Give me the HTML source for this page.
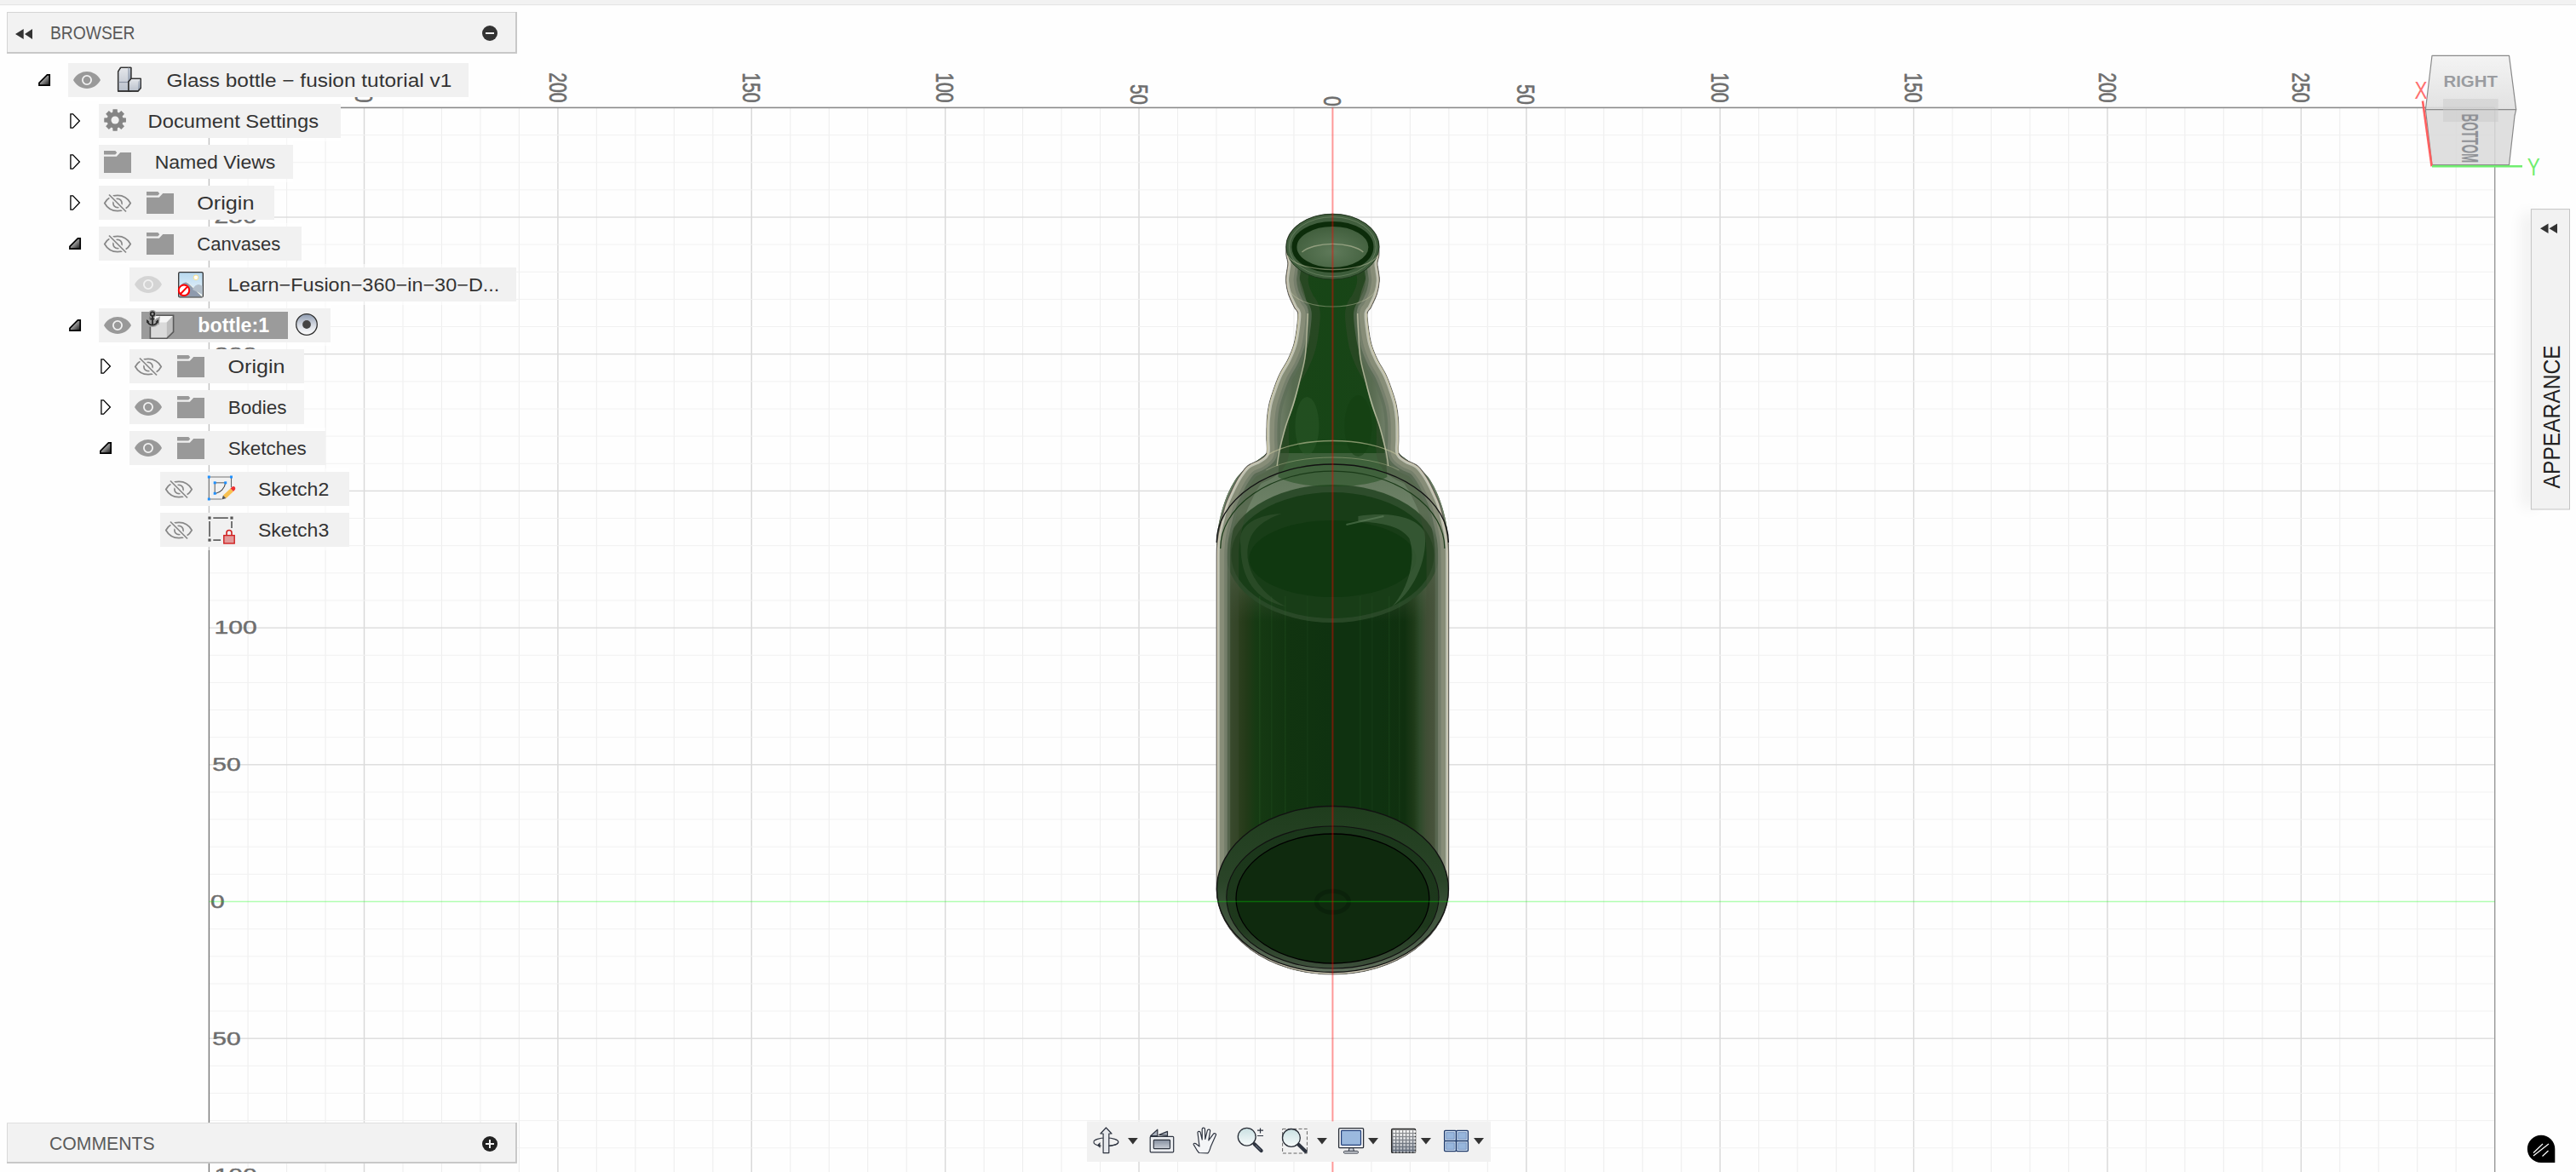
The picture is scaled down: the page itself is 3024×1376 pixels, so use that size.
<!DOCTYPE html>
<html><head><meta charset="utf-8"><title>Fusion 360</title><style>
html,body{margin:0;padding:0;width:3024px;height:1376px;overflow:hidden;background:#fefefe;font-family:"Liberation Sans",sans-serif}
svg{position:absolute;left:0;top:0}
text{font-family:"Liberation Sans",sans-serif}
.lab{font-size:30px;fill:#6e6e6e;stroke:#6e6e6e;stroke-width:0.6px}
</style></head><body>
<svg width="3024" height="1376" viewBox="0 0 3024 1376">
<defs>
<linearGradient id="tg" x1="0.2" y1="0.2" x2="1" y2="1"><stop offset="0" stop-color="#d8d8d8"/><stop offset="1" stop-color="#111"/></linearGradient>
<linearGradient id="cubeF" x1="0" y1="0" x2="0" y2="1"><stop offset="0" stop-color="#e4e6ea"/><stop offset="1" stop-color="#b9c0cb"/></linearGradient>
<linearGradient id="cubeS" x1="0" y1="0" x2="0" y2="1"><stop offset="0" stop-color="#c5ccd6"/><stop offset="1" stop-color="#8f9aab"/></linearGradient>
<linearGradient id="radioG" x1="0" y1="0" x2="0" y2="1"><stop offset="0" stop-color="#8e9bb0"/><stop offset="0.55" stop-color="#d9dde5"/><stop offset="1" stop-color="#ffffff"/></linearGradient>
<linearGradient id="skyG" x1="0" y1="0" x2="0" y2="1"><stop offset="0" stop-color="#b7d8ee"/><stop offset="1" stop-color="#f0f9ff"/></linearGradient>
<linearGradient id="vcTop" x1="0" y1="0" x2="0" y2="1"><stop offset="0" stop-color="#f2f2f2"/><stop offset="1" stop-color="#dedede"/></linearGradient>
<linearGradient id="lookG" x1="0" y1="0" x2="0" y2="1"><stop offset="0" stop-color="#858fa0"/><stop offset="1" stop-color="#c9ced6"/></linearGradient>
<linearGradient id="lensG" x1="0" y1="0" x2="0" y2="1"><stop offset="0" stop-color="#c9e0e2"/><stop offset="1" stop-color="#f7fbfb"/></linearGradient>
<linearGradient id="gridIcG" x1="0" y1="0" x2="0" y2="1"><stop offset="0" stop-color="#9a9a9a"/><stop offset="1" stop-color="#5c6676"/></linearGradient>
<filter id="sh" x="-300%" y="-10%" width="700%" height="120%"><feGaussianBlur stdDeviation="9"/></filter>
</defs>
<rect x="0" y="0" width="3024" height="6" fill="#f2f2f2"/>
<rect x="0" y="5" width="3024" height="1.2" fill="#e6e6e6"/>

<rect x="290.55" y="126.4" width="1.1" height="1249.6" fill="#eeeeee"/>
<rect x="336.03" y="126.4" width="1.1" height="1249.6" fill="#eeeeee"/>
<rect x="381.50" y="126.4" width="1.1" height="1249.6" fill="#eeeeee"/>
<rect x="426.83" y="126.4" width="1.4" height="1249.6" fill="#d8d8d8"/>
<rect x="472.45" y="126.4" width="1.1" height="1249.6" fill="#eeeeee"/>
<rect x="517.93" y="126.4" width="1.1" height="1249.6" fill="#eeeeee"/>
<rect x="563.40" y="126.4" width="1.1" height="1249.6" fill="#eeeeee"/>
<rect x="608.88" y="126.4" width="1.1" height="1249.6" fill="#eeeeee"/>
<rect x="654.20" y="126.4" width="1.4" height="1249.6" fill="#d8d8d8"/>
<rect x="699.83" y="126.4" width="1.1" height="1249.6" fill="#eeeeee"/>
<rect x="745.30" y="126.4" width="1.1" height="1249.6" fill="#eeeeee"/>
<rect x="790.78" y="126.4" width="1.1" height="1249.6" fill="#eeeeee"/>
<rect x="836.25" y="126.4" width="1.1" height="1249.6" fill="#eeeeee"/>
<rect x="881.58" y="126.4" width="1.4" height="1249.6" fill="#d8d8d8"/>
<rect x="927.20" y="126.4" width="1.1" height="1249.6" fill="#eeeeee"/>
<rect x="972.68" y="126.4" width="1.1" height="1249.6" fill="#eeeeee"/>
<rect x="1018.15" y="126.4" width="1.1" height="1249.6" fill="#eeeeee"/>
<rect x="1063.63" y="126.4" width="1.1" height="1249.6" fill="#eeeeee"/>
<rect x="1108.95" y="126.4" width="1.4" height="1249.6" fill="#d8d8d8"/>
<rect x="1154.58" y="126.4" width="1.1" height="1249.6" fill="#eeeeee"/>
<rect x="1200.05" y="126.4" width="1.1" height="1249.6" fill="#eeeeee"/>
<rect x="1245.53" y="126.4" width="1.1" height="1249.6" fill="#eeeeee"/>
<rect x="1291.00" y="126.4" width="1.1" height="1249.6" fill="#eeeeee"/>
<rect x="1336.33" y="126.4" width="1.4" height="1249.6" fill="#d8d8d8"/>
<rect x="1381.95" y="126.4" width="1.1" height="1249.6" fill="#eeeeee"/>
<rect x="1427.43" y="126.4" width="1.1" height="1249.6" fill="#eeeeee"/>
<rect x="1472.90" y="126.4" width="1.1" height="1249.6" fill="#eeeeee"/>
<rect x="1518.38" y="126.4" width="1.1" height="1249.6" fill="#eeeeee"/>
<rect x="1609.33" y="126.4" width="1.1" height="1249.6" fill="#eeeeee"/>
<rect x="1654.80" y="126.4" width="1.1" height="1249.6" fill="#eeeeee"/>
<rect x="1700.28" y="126.4" width="1.1" height="1249.6" fill="#eeeeee"/>
<rect x="1745.75" y="126.4" width="1.1" height="1249.6" fill="#eeeeee"/>
<rect x="1791.08" y="126.4" width="1.4" height="1249.6" fill="#d8d8d8"/>
<rect x="1836.70" y="126.4" width="1.1" height="1249.6" fill="#eeeeee"/>
<rect x="1882.18" y="126.4" width="1.1" height="1249.6" fill="#eeeeee"/>
<rect x="1927.65" y="126.4" width="1.1" height="1249.6" fill="#eeeeee"/>
<rect x="1973.13" y="126.4" width="1.1" height="1249.6" fill="#eeeeee"/>
<rect x="2018.45" y="126.4" width="1.4" height="1249.6" fill="#d8d8d8"/>
<rect x="2064.07" y="126.4" width="1.1" height="1249.6" fill="#eeeeee"/>
<rect x="2109.55" y="126.4" width="1.1" height="1249.6" fill="#eeeeee"/>
<rect x="2155.03" y="126.4" width="1.1" height="1249.6" fill="#eeeeee"/>
<rect x="2200.50" y="126.4" width="1.1" height="1249.6" fill="#eeeeee"/>
<rect x="2245.83" y="126.4" width="1.4" height="1249.6" fill="#d8d8d8"/>
<rect x="2291.45" y="126.4" width="1.1" height="1249.6" fill="#eeeeee"/>
<rect x="2336.93" y="126.4" width="1.1" height="1249.6" fill="#eeeeee"/>
<rect x="2382.40" y="126.4" width="1.1" height="1249.6" fill="#eeeeee"/>
<rect x="2427.88" y="126.4" width="1.1" height="1249.6" fill="#eeeeee"/>
<rect x="2473.20" y="126.4" width="1.4" height="1249.6" fill="#d8d8d8"/>
<rect x="2518.82" y="126.4" width="1.1" height="1249.6" fill="#eeeeee"/>
<rect x="2564.30" y="126.4" width="1.1" height="1249.6" fill="#eeeeee"/>
<rect x="2609.77" y="126.4" width="1.1" height="1249.6" fill="#eeeeee"/>
<rect x="2655.25" y="126.4" width="1.1" height="1249.6" fill="#eeeeee"/>
<rect x="2700.58" y="126.4" width="1.4" height="1249.6" fill="#d8d8d8"/>
<rect x="2746.20" y="126.4" width="1.1" height="1249.6" fill="#eeeeee"/>
<rect x="2791.68" y="126.4" width="1.1" height="1249.6" fill="#eeeeee"/>
<rect x="2837.15" y="126.4" width="1.1" height="1249.6" fill="#eeeeee"/>
<rect x="2882.62" y="126.4" width="1.1" height="1249.6" fill="#eeeeee"/>
<rect x="245.4" y="158.08" width="2683.2999999999997" height="1.0" fill="#f1f1f1"/>
<rect x="245.4" y="190.22" width="2683.2999999999997" height="1.0" fill="#f1f1f1"/>
<rect x="245.4" y="222.36" width="2683.2999999999997" height="1.0" fill="#f1f1f1"/>
<rect x="245.4" y="254.30" width="2683.2999999999997" height="1.4" fill="#dcdcdc"/>
<rect x="245.4" y="286.64" width="2683.2999999999997" height="1.0" fill="#f1f1f1"/>
<rect x="245.4" y="318.78" width="2683.2999999999997" height="1.0" fill="#f1f1f1"/>
<rect x="245.4" y="350.92" width="2683.2999999999997" height="1.0" fill="#f1f1f1"/>
<rect x="245.4" y="383.06" width="2683.2999999999997" height="1.0" fill="#f1f1f1"/>
<rect x="245.4" y="415.00" width="2683.2999999999997" height="1.4" fill="#dcdcdc"/>
<rect x="245.4" y="447.34" width="2683.2999999999997" height="1.0" fill="#f1f1f1"/>
<rect x="245.4" y="479.48" width="2683.2999999999997" height="1.0" fill="#f1f1f1"/>
<rect x="245.4" y="511.62" width="2683.2999999999997" height="1.0" fill="#f1f1f1"/>
<rect x="245.4" y="543.76" width="2683.2999999999997" height="1.0" fill="#f1f1f1"/>
<rect x="245.4" y="575.70" width="2683.2999999999997" height="1.4" fill="#dcdcdc"/>
<rect x="245.4" y="608.04" width="2683.2999999999997" height="1.0" fill="#f1f1f1"/>
<rect x="245.4" y="640.18" width="2683.2999999999997" height="1.0" fill="#f1f1f1"/>
<rect x="245.4" y="672.32" width="2683.2999999999997" height="1.0" fill="#f1f1f1"/>
<rect x="245.4" y="704.46" width="2683.2999999999997" height="1.0" fill="#f1f1f1"/>
<rect x="245.4" y="736.40" width="2683.2999999999997" height="1.4" fill="#dcdcdc"/>
<rect x="245.4" y="768.74" width="2683.2999999999997" height="1.0" fill="#f1f1f1"/>
<rect x="245.4" y="800.88" width="2683.2999999999997" height="1.0" fill="#f1f1f1"/>
<rect x="245.4" y="833.02" width="2683.2999999999997" height="1.0" fill="#f1f1f1"/>
<rect x="245.4" y="865.16" width="2683.2999999999997" height="1.0" fill="#f1f1f1"/>
<rect x="245.4" y="897.10" width="2683.2999999999997" height="1.4" fill="#dcdcdc"/>
<rect x="245.4" y="929.44" width="2683.2999999999997" height="1.0" fill="#f1f1f1"/>
<rect x="245.4" y="961.58" width="2683.2999999999997" height="1.0" fill="#f1f1f1"/>
<rect x="245.4" y="993.72" width="2683.2999999999997" height="1.0" fill="#f1f1f1"/>
<rect x="245.4" y="1025.86" width="2683.2999999999997" height="1.0" fill="#f1f1f1"/>
<rect x="245.4" y="1090.14" width="2683.2999999999997" height="1.0" fill="#f1f1f1"/>
<rect x="245.4" y="1122.28" width="2683.2999999999997" height="1.0" fill="#f1f1f1"/>
<rect x="245.4" y="1154.42" width="2683.2999999999997" height="1.0" fill="#f1f1f1"/>
<rect x="245.4" y="1186.56" width="2683.2999999999997" height="1.0" fill="#f1f1f1"/>
<rect x="245.4" y="1218.50" width="2683.2999999999997" height="1.4" fill="#dcdcdc"/>
<rect x="245.4" y="1250.84" width="2683.2999999999997" height="1.0" fill="#f1f1f1"/>
<rect x="245.4" y="1282.98" width="2683.2999999999997" height="1.0" fill="#f1f1f1"/>
<rect x="245.4" y="1315.12" width="2683.2999999999997" height="1.0" fill="#f1f1f1"/>
<rect x="245.4" y="1347.26" width="2683.2999999999997" height="1.0" fill="#f1f1f1"/>
<rect x="245.4" y="125.60000000000001" width="2683.2999999999997" height="1.6" fill="#8a8a8a"/>
<rect x="244.70000000000002" y="126.4" width="1.4" height="1249.6" fill="#777"/>
<rect x="2928.0" y="126.4" width="1.4" height="1249.6" fill="#999"/>
<rect x="80" y="70" width="470" height="48" fill="#fff" opacity="0.55"/>
<rect x="116" y="118" width="284" height="48" fill="#fff" opacity="0.55"/>
<rect x="116" y="166" width="228" height="48" fill="#fff" opacity="0.55"/>
<rect x="116" y="214" width="206" height="48" fill="#fff" opacity="0.55"/>
<rect x="116" y="262" width="238" height="48" fill="#fff" opacity="0.55"/>
<rect x="152" y="310" width="454" height="48" fill="#fff" opacity="0.55"/>
<rect x="116" y="358" width="272" height="48" fill="#fff" opacity="0.55"/>
<rect x="152" y="406" width="205" height="48" fill="#fff" opacity="0.55"/>
<rect x="152" y="454" width="205" height="48" fill="#fff" opacity="0.55"/>
<rect x="152" y="502" width="230" height="48" fill="#fff" opacity="0.55"/>
<rect x="188" y="550" width="222" height="48" fill="#fff" opacity="0.55"/>
<rect x="188" y="598" width="222" height="48" fill="#fff" opacity="0.55"/>
<text transform="translate(427.53,120.60) rotate(90) scale(0.708,1)" text-anchor="end" class="lab" dominant-baseline="central">250</text>
<text transform="translate(654.90,120.60) rotate(90) scale(0.708,1)" text-anchor="end" class="lab" dominant-baseline="central">200</text>
<text transform="translate(882.28,120.60) rotate(90) scale(0.708,1)" text-anchor="end" class="lab" dominant-baseline="central">150</text>
<text transform="translate(1109.65,120.60) rotate(90) scale(0.708,1)" text-anchor="end" class="lab" dominant-baseline="central">100</text>
<text transform="translate(1337.03,122.70) rotate(90) scale(0.708,1)" text-anchor="end" class="lab" dominant-baseline="central">50</text>
<text transform="translate(1564.40,124.80) rotate(90) scale(0.708,1)" text-anchor="end" class="lab" dominant-baseline="central">0</text>
<text transform="translate(1791.78,122.70) rotate(90) scale(0.708,1)" text-anchor="end" class="lab" dominant-baseline="central">50</text>
<text transform="translate(2019.15,120.60) rotate(90) scale(0.708,1)" text-anchor="end" class="lab" dominant-baseline="central">100</text>
<text transform="translate(2246.53,120.60) rotate(90) scale(0.708,1)" text-anchor="end" class="lab" dominant-baseline="central">150</text>
<text transform="translate(2473.90,120.60) rotate(90) scale(0.708,1)" text-anchor="end" class="lab" dominant-baseline="central">200</text>
<text transform="translate(2701.28,120.60) rotate(90) scale(0.708,1)" text-anchor="end" class="lab" dominant-baseline="central">250</text>
<text transform="translate(251.60,255.00) scale(1,0.708)" class="lab" dominant-baseline="central">250</text>
<text transform="translate(251.60,415.70) scale(1,0.708)" class="lab" dominant-baseline="central">200</text>
<text transform="translate(251.60,576.40) scale(1,0.708)" class="lab" dominant-baseline="central">150</text>
<text transform="translate(251.60,737.10) scale(1,0.708)" class="lab" dominant-baseline="central">100</text>
<text transform="translate(249.30,897.80) scale(1,0.708)" class="lab" dominant-baseline="central">50</text>
<text transform="translate(247.00,1058.50) scale(1,0.708)" class="lab" dominant-baseline="central">0</text>
<text transform="translate(249.30,1219.20) scale(1,0.708)" class="lab" dominant-baseline="central">50</text>
<text transform="translate(251.60,1379.90) scale(1,0.708)" class="lab" dominant-baseline="central">100</text>
<defs>
<linearGradient id="bodyG" x1="1428" y1="0" x2="1700.6" y2="0" gradientUnits="userSpaceOnUse">
<stop offset="0" stop-color="#46553a"/>
<stop offset="0.09" stop-color="#2e4020"/>
<stop offset="0.13" stop-color="#233a18"/>
<stop offset="0.17" stop-color="#163a13"/>
<stop offset="0.3" stop-color="#113410"/>
<stop offset="0.5" stop-color="#0f3210"/>
<stop offset="0.7" stop-color="#0f3210"/>
<stop offset="0.81" stop-color="#10300f"/>
<stop offset="0.85" stop-color="#1e3a18"/>
<stop offset="0.875" stop-color="#2e4a2a"/>
<stop offset="0.91" stop-color="#445038"/>
<stop offset="1" stop-color="#6a6e5a"/>
</linearGradient>
<linearGradient id="neckG" x1="1486" y1="0" x2="1642" y2="0" gradientUnits="userSpaceOnUse">
<stop offset="0" stop-color="#7d8c76"/>
<stop offset="0.08" stop-color="#8e9c86"/>
<stop offset="0.2" stop-color="#5f7658"/>
<stop offset="0.5" stop-color="#4a6644"/>
<stop offset="0.8" stop-color="#5f7658"/>
<stop offset="0.92" stop-color="#8e9c86"/>
<stop offset="1" stop-color="#77866f"/>
</linearGradient>
<linearGradient id="innerG" x1="1440" y1="0" x2="1688" y2="0" gradientUnits="userSpaceOnUse">
<stop offset="0" stop-color="#2a4a26"/>
<stop offset="0.2" stop-color="#1a4418"/>
<stop offset="0.5" stop-color="#174516"/>
<stop offset="0.8" stop-color="#1a4418"/>
<stop offset="1" stop-color="#2a4a26"/>
</linearGradient>
<linearGradient id="ringG" x1="0" y1="946" x2="0" y2="1142" gradientUnits="userSpaceOnUse"><stop offset="0" stop-color="#1f3d1d"/><stop offset="0.45" stop-color="#2a4428"/><stop offset="0.8" stop-color="#4a5c47"/><stop offset="1" stop-color="#62705e"/></linearGradient>
<linearGradient id="ring2G" x1="0" y1="970" x2="0" y2="1137" gradientUnits="userSpaceOnUse"><stop offset="0" stop-color="#1a361a"/><stop offset="0.7" stop-color="#1e381c"/><stop offset="1" stop-color="#3e503c"/></linearGradient>
<linearGradient id="shG" x1="0" y1="532" x2="0" y2="730" gradientUnits="userSpaceOnUse"><stop offset="0" stop-color="#5d7458"/><stop offset="0.35" stop-color="#6f8268"/><stop offset="0.6" stop-color="#5f7258" stop-opacity="0.8"/><stop offset="1" stop-color="#46553a" stop-opacity="0"/></linearGradient>
<radialGradient id="openG" cx="0.5" cy="0.6" r="0.6"><stop offset="0" stop-color="#5f7a5a"/><stop offset="1" stop-color="#3e5c3a"/></radialGradient>
</defs>
<path d="M1509.90,289.70 C1509.92,291.42 1509.67,296.78 1510.00,300.00 C1510.33,303.22 1511.80,305.83 1511.90,309.00 C1512.00,312.17 1510.98,315.50 1510.60,319.00 C1510.22,322.50 1509.30,325.67 1509.60,330.00 C1509.90,334.33 1510.77,339.88 1512.40,345.00 C1514.03,350.12 1517.52,356.87 1519.40,360.70 C1521.28,364.53 1523.20,363.95 1523.70,368.00 C1524.20,372.05 1523.17,379.03 1522.40,385.00 C1521.63,390.97 1520.82,397.68 1519.10,403.80 C1517.38,409.92 1514.93,415.73 1512.10,421.70 C1509.27,427.67 1504.93,433.63 1502.10,439.60 C1499.27,445.57 1497.17,451.53 1495.10,457.50 C1493.03,463.47 1491.00,469.43 1489.70,475.40 C1488.40,481.37 1487.77,486.70 1487.30,493.30 C1486.83,499.90 1486.97,508.55 1486.90,515.00 C1486.83,521.45 1488.32,527.83 1486.90,532.00 C1485.48,536.17 1482.12,537.50 1478.40,540.00 C1474.68,542.50 1468.60,543.67 1464.60,547.00 C1460.60,550.33 1457.32,555.57 1454.40,560.00 C1451.48,564.43 1449.68,568.27 1447.10,573.60 C1444.52,578.93 1441.18,585.47 1438.90,592.00 C1436.62,598.53 1434.92,606.47 1433.40,612.80 C1431.88,619.13 1430.63,624.80 1429.80,630.00 C1428.97,635.20 1428.67,639.00 1428.40,644.00 C1428.13,649.00 1428.23,657.33 1428.20,660.00 L1428.20,1044 A136.2,100 0 0 0 1700.60,1044 L1700.60,660 L1700.60,660.00 C1700.57,657.33 1700.67,649.00 1700.40,644.00 C1700.13,639.00 1699.83,635.20 1699.00,630.00 C1698.17,624.80 1696.92,619.13 1695.40,612.80 C1693.88,606.47 1692.18,598.53 1689.90,592.00 C1687.62,585.47 1684.28,578.93 1681.70,573.60 C1679.12,568.27 1677.32,564.43 1674.40,560.00 C1671.48,555.57 1668.20,550.33 1664.20,547.00 C1660.20,543.67 1654.12,542.50 1650.40,540.00 C1646.68,537.50 1643.32,536.17 1641.90,532.00 C1640.48,527.83 1641.97,521.45 1641.90,515.00 C1641.83,508.55 1641.97,499.90 1641.50,493.30 C1641.03,486.70 1640.40,481.37 1639.10,475.40 C1637.80,469.43 1635.77,463.47 1633.70,457.50 C1631.63,451.53 1629.53,445.57 1626.70,439.60 C1623.87,433.63 1619.53,427.67 1616.70,421.70 C1613.87,415.73 1611.42,409.92 1609.70,403.80 C1607.98,397.68 1607.17,390.97 1606.40,385.00 C1605.63,379.03 1604.60,372.05 1605.10,368.00 C1605.60,363.95 1607.52,364.53 1609.40,360.70 C1611.28,356.87 1614.77,350.12 1616.40,345.00 C1618.03,339.88 1618.90,334.33 1619.20,330.00 C1619.50,325.67 1618.58,322.50 1618.20,319.00 C1617.82,315.50 1616.80,312.17 1616.90,309.00 C1617.00,305.83 1618.47,303.22 1618.80,300.00 C1619.13,296.78 1618.88,291.42 1618.90,289.70 A54.5,38.4 0 0 0 1509.90,289.7 Z" fill="url(#neckG)" opacity="0.92"/>
<ellipse cx="1564.4" cy="326" rx="54.8" ry="40" fill="#4c6446" opacity="0.95" stroke="#b8bca0" stroke-width="1" stroke-opacity="0.5"/>
<path d="M1519.90,300.00 C1520.65,303.83 1522.48,315.50 1524.40,323.00 C1526.32,330.50 1529.45,337.50 1531.40,345.00 C1533.35,352.50 1535.52,359.67 1536.10,368.00 C1536.68,376.33 1535.47,386.17 1534.90,395.00 C1534.33,403.83 1534.12,412.17 1532.70,421.00 C1531.28,429.83 1528.67,439.00 1526.40,448.00 C1524.13,457.00 1521.77,466.33 1519.10,475.00 C1516.43,483.67 1513.10,491.00 1510.40,500.00 C1507.70,509.00 1504.62,521.17 1502.90,529.00 C1501.18,536.83 1504.02,541.00 1500.10,547.00 C1496.18,553.00 1486.18,557.83 1479.40,565.00 C1472.62,572.17 1464.73,580.83 1459.40,590.00 C1454.07,599.17 1450.07,610.00 1447.40,620.00 C1444.73,630.00 1444.23,640.00 1443.40,650.00 C1442.57,660.00 1442.57,675.00 1442.40,680.00 L1442.40,1040 A122,86 0 0 0 1686.40,1040 L1686.40,680 L1686.40,680.00 C1686.23,675.00 1686.23,660.00 1685.40,650.00 C1684.57,640.00 1684.07,630.00 1681.40,620.00 C1678.73,610.00 1674.73,599.17 1669.40,590.00 C1664.07,580.83 1656.18,572.17 1649.40,565.00 C1642.62,557.83 1632.62,553.00 1628.70,547.00 C1624.78,541.00 1627.62,536.83 1625.90,529.00 C1624.18,521.17 1621.10,509.00 1618.40,500.00 C1615.70,491.00 1612.37,483.67 1609.70,475.00 C1607.03,466.33 1604.67,457.00 1602.40,448.00 C1600.13,439.00 1597.52,429.83 1596.10,421.00 C1594.68,412.17 1594.47,403.83 1593.90,395.00 C1593.33,386.17 1592.12,376.33 1592.70,368.00 C1593.28,359.67 1595.45,352.50 1597.40,345.00 C1599.35,337.50 1602.48,330.50 1604.40,323.00 C1606.32,315.50 1608.15,303.83 1608.90,300.00 A44.5,30 0 0 0 1519.90,300 Z" fill="url(#innerG)"/>
<path d="M1486.9,532 C1479.4,540 1464.4,546 1452.4,560 C1439.4,578 1428.4,610 1428.1000000000001,644 L1428.1000000000001,1044 A136.3,100 0 0 0 1700.7,1044 L1700.7,644 C1700.4,610 1689.4,578 1676.4,560 C1664.4,546 1649.4,540 1641.9,532 Z" fill="url(#bodyG)"/>
<path d="M1486.9,532 C1479.4,540 1464.4,546 1452.4,560 C1439.4,578 1428.4,610 1428.1000000000001,644 L1428.1000000000001,730 L1700.7,730 L1700.7,644 C1700.4,610 1689.4,578 1676.4,560 C1664.4,546 1649.4,540 1641.9,532 Z" fill="url(#shG)"/>
<ellipse cx="1564.4" cy="650" rx="125" ry="81" fill="#2a4a28" opacity="0.95"/>
<ellipse cx="1564.4" cy="652" rx="119" ry="74" fill="#183d17"/>
<ellipse cx="1564.4" cy="656" rx="98" ry="45" fill="#103810"/>
<path d="M1502.4,529 C1524.4,520 1604.4,520 1626.4,529 L1628.4,560 C1604.4,575 1524.4,575 1500.4,560 Z" fill="#1c4a1a" opacity="0.5"/>
<path d="M1594.4,606 C1634.4,600 1664.4,608 1672.4,625 C1676.4,650 1664.4,690 1634.4,712 C1654.4,690 1662.4,655 1654.4,632 C1644.4,618 1624.4,614 1594.4,612 Z" fill="#4d6c49" opacity="0.55"/>
<path d="M1456.4,640 C1452.4,620 1469.4,605 1504.4,603 C1479.4,612 1464.4,625 1464.4,650 C1464.4,675 1484.4,700 1509.4,712 C1474.4,705 1456.4,680 1456.4,640 Z" fill="#3d5c3a" opacity="0.45"/>
<path d="M1580.4,616 L1624.4,606" stroke="#6a8a66" stroke-width="2" opacity="0.5"/>
<rect x="1478" y="700" width="1.5" height="330" fill="#3a7a36" opacity="0.18"/>
<rect x="1492" y="700" width="1.5" height="330" fill="#3a7a36" opacity="0.12"/>
<rect x="1508" y="700" width="1.5" height="330" fill="#3a7a36" opacity="0.15"/>
<rect x="1534" y="700" width="1.5" height="330" fill="#3a7a36" opacity="0.1"/>
<rect x="1596" y="700" width="1.5" height="330" fill="#3a7a36" opacity="0.12"/>
<rect x="1610" y="700" width="1.5" height="330" fill="#3a7a36" opacity="0.1"/>
<rect x="1630" y="700" width="1.5" height="330" fill="#3a7a36" opacity="0.14"/>
<rect x="1642" y="700" width="1.5" height="330" fill="#3a7a36" opacity="0.1"/>
<ellipse cx="1534.4" cy="500" rx="14" ry="34" fill="#2f5c2c" opacity="0.45"/>
<ellipse cx="1594.4" cy="500" rx="16" ry="36" fill="#123e10" opacity="0.5"/>
<clipPath id="silClip"><path d="M1509.90,289.70 C1509.92,291.42 1509.67,296.78 1510.00,300.00 C1510.33,303.22 1511.80,305.83 1511.90,309.00 C1512.00,312.17 1510.98,315.50 1510.60,319.00 C1510.22,322.50 1509.30,325.67 1509.60,330.00 C1509.90,334.33 1510.77,339.88 1512.40,345.00 C1514.03,350.12 1517.52,356.87 1519.40,360.70 C1521.28,364.53 1523.20,363.95 1523.70,368.00 C1524.20,372.05 1523.17,379.03 1522.40,385.00 C1521.63,390.97 1520.82,397.68 1519.10,403.80 C1517.38,409.92 1514.93,415.73 1512.10,421.70 C1509.27,427.67 1504.93,433.63 1502.10,439.60 C1499.27,445.57 1497.17,451.53 1495.10,457.50 C1493.03,463.47 1491.00,469.43 1489.70,475.40 C1488.40,481.37 1487.77,486.70 1487.30,493.30 C1486.83,499.90 1486.97,508.55 1486.90,515.00 C1486.83,521.45 1488.32,527.83 1486.90,532.00 C1485.48,536.17 1482.12,537.50 1478.40,540.00 C1474.68,542.50 1468.60,543.67 1464.60,547.00 C1460.60,550.33 1457.32,555.57 1454.40,560.00 C1451.48,564.43 1449.68,568.27 1447.10,573.60 C1444.52,578.93 1441.18,585.47 1438.90,592.00 C1436.62,598.53 1434.92,606.47 1433.40,612.80 C1431.88,619.13 1430.63,624.80 1429.80,630.00 C1428.97,635.20 1428.67,639.00 1428.40,644.00 C1428.13,649.00 1428.23,657.33 1428.20,660.00 L1428.20,1044 A136.2,100 0 0 0 1700.60,1044 L1700.60,660 L1700.60,660.00 C1700.57,657.33 1700.67,649.00 1700.40,644.00 C1700.13,639.00 1699.83,635.20 1699.00,630.00 C1698.17,624.80 1696.92,619.13 1695.40,612.80 C1693.88,606.47 1692.18,598.53 1689.90,592.00 C1687.62,585.47 1684.28,578.93 1681.70,573.60 C1679.12,568.27 1677.32,564.43 1674.40,560.00 C1671.48,555.57 1668.20,550.33 1664.20,547.00 C1660.20,543.67 1654.12,542.50 1650.40,540.00 C1646.68,537.50 1643.32,536.17 1641.90,532.00 C1640.48,527.83 1641.97,521.45 1641.90,515.00 C1641.83,508.55 1641.97,499.90 1641.50,493.30 C1641.03,486.70 1640.40,481.37 1639.10,475.40 C1637.80,469.43 1635.77,463.47 1633.70,457.50 C1631.63,451.53 1629.53,445.57 1626.70,439.60 C1623.87,433.63 1619.53,427.67 1616.70,421.70 C1613.87,415.73 1611.42,409.92 1609.70,403.80 C1607.98,397.68 1607.17,390.97 1606.40,385.00 C1605.63,379.03 1604.60,372.05 1605.10,368.00 C1605.60,363.95 1607.52,364.53 1609.40,360.70 C1611.28,356.87 1614.77,350.12 1616.40,345.00 C1618.03,339.88 1618.90,334.33 1619.20,330.00 C1619.50,325.67 1618.58,322.50 1618.20,319.00 C1617.82,315.50 1616.80,312.17 1616.90,309.00 C1617.00,305.83 1618.47,303.22 1618.80,300.00 C1619.13,296.78 1618.88,291.42 1618.90,289.70 A54.5,38.4 0 0 0 1509.90,289.7 Z"/></clipPath>
<g clip-path="url(#silClip)" fill="none">
<path d="M1509.90,289.70 C1509.92,291.42 1509.67,296.78 1510.00,300.00 C1510.33,303.22 1511.80,305.83 1511.90,309.00 C1512.00,312.17 1510.98,315.50 1510.60,319.00 C1510.22,322.50 1509.30,325.67 1509.60,330.00 C1509.90,334.33 1510.77,339.88 1512.40,345.00 C1514.03,350.12 1517.52,356.87 1519.40,360.70 C1521.28,364.53 1523.20,363.95 1523.70,368.00 C1524.20,372.05 1523.17,379.03 1522.40,385.00 C1521.63,390.97 1520.82,397.68 1519.10,403.80 C1517.38,409.92 1514.93,415.73 1512.10,421.70 C1509.27,427.67 1504.93,433.63 1502.10,439.60 C1499.27,445.57 1497.17,451.53 1495.10,457.50 C1493.03,463.47 1491.00,469.43 1489.70,475.40 C1488.40,481.37 1487.77,486.70 1487.30,493.30 C1486.83,499.90 1486.97,508.55 1486.90,515.00 C1486.83,521.45 1488.32,527.83 1486.90,532.00 C1485.48,536.17 1482.12,537.50 1478.40,540.00 C1474.68,542.50 1468.60,543.67 1464.60,547.00 C1460.60,550.33 1457.32,555.57 1454.40,560.00 C1451.48,564.43 1449.68,568.27 1447.10,573.60 C1444.52,578.93 1441.18,585.47 1438.90,592.00 C1436.62,598.53 1434.92,606.47 1433.40,612.80 C1431.88,619.13 1430.63,624.80 1429.80,630.00 C1428.97,635.20 1428.67,639.00 1428.40,644.00 C1428.13,649.00 1428.23,657.33 1428.20,660.00 L1428.20,1044 A136.2,100 0 0 0 1700.60,1044 L1700.60,660 L1700.60,660.00 C1700.57,657.33 1700.67,649.00 1700.40,644.00 C1700.13,639.00 1699.83,635.20 1699.00,630.00 C1698.17,624.80 1696.92,619.13 1695.40,612.80 C1693.88,606.47 1692.18,598.53 1689.90,592.00 C1687.62,585.47 1684.28,578.93 1681.70,573.60 C1679.12,568.27 1677.32,564.43 1674.40,560.00 C1671.48,555.57 1668.20,550.33 1664.20,547.00 C1660.20,543.67 1654.12,542.50 1650.40,540.00 C1646.68,537.50 1643.32,536.17 1641.90,532.00 C1640.48,527.83 1641.97,521.45 1641.90,515.00 C1641.83,508.55 1641.97,499.90 1641.50,493.30 C1641.03,486.70 1640.40,481.37 1639.10,475.40 C1637.80,469.43 1635.77,463.47 1633.70,457.50 C1631.63,451.53 1629.53,445.57 1626.70,439.60 C1623.87,433.63 1619.53,427.67 1616.70,421.70 C1613.87,415.73 1611.42,409.92 1609.70,403.80 C1607.98,397.68 1607.17,390.97 1606.40,385.00 C1605.63,379.03 1604.60,372.05 1605.10,368.00 C1605.60,363.95 1607.52,364.53 1609.40,360.70 C1611.28,356.87 1614.77,350.12 1616.40,345.00 C1618.03,339.88 1618.90,334.33 1619.20,330.00 C1619.50,325.67 1618.58,322.50 1618.20,319.00 C1617.82,315.50 1616.80,312.17 1616.90,309.00 C1617.00,305.83 1618.47,303.22 1618.80,300.00 C1619.13,296.78 1618.88,291.42 1618.90,289.70 A54.5,38.4 0 0 0 1509.90,289.7 Z" stroke="#3e4e34" stroke-width="52" opacity="0.4"/>
<path d="M1509.90,289.70 C1509.92,291.42 1509.67,296.78 1510.00,300.00 C1510.33,303.22 1511.80,305.83 1511.90,309.00 C1512.00,312.17 1510.98,315.50 1510.60,319.00 C1510.22,322.50 1509.30,325.67 1509.60,330.00 C1509.90,334.33 1510.77,339.88 1512.40,345.00 C1514.03,350.12 1517.52,356.87 1519.40,360.70 C1521.28,364.53 1523.20,363.95 1523.70,368.00 C1524.20,372.05 1523.17,379.03 1522.40,385.00 C1521.63,390.97 1520.82,397.68 1519.10,403.80 C1517.38,409.92 1514.93,415.73 1512.10,421.70 C1509.27,427.67 1504.93,433.63 1502.10,439.60 C1499.27,445.57 1497.17,451.53 1495.10,457.50 C1493.03,463.47 1491.00,469.43 1489.70,475.40 C1488.40,481.37 1487.77,486.70 1487.30,493.30 C1486.83,499.90 1486.97,508.55 1486.90,515.00 C1486.83,521.45 1488.32,527.83 1486.90,532.00 C1485.48,536.17 1482.12,537.50 1478.40,540.00 C1474.68,542.50 1468.60,543.67 1464.60,547.00 C1460.60,550.33 1457.32,555.57 1454.40,560.00 C1451.48,564.43 1449.68,568.27 1447.10,573.60 C1444.52,578.93 1441.18,585.47 1438.90,592.00 C1436.62,598.53 1434.92,606.47 1433.40,612.80 C1431.88,619.13 1430.63,624.80 1429.80,630.00 C1428.97,635.20 1428.67,639.00 1428.40,644.00 C1428.13,649.00 1428.23,657.33 1428.20,660.00 L1428.20,1044 A136.2,100 0 0 0 1700.60,1044 L1700.60,660 L1700.60,660.00 C1700.57,657.33 1700.67,649.00 1700.40,644.00 C1700.13,639.00 1699.83,635.20 1699.00,630.00 C1698.17,624.80 1696.92,619.13 1695.40,612.80 C1693.88,606.47 1692.18,598.53 1689.90,592.00 C1687.62,585.47 1684.28,578.93 1681.70,573.60 C1679.12,568.27 1677.32,564.43 1674.40,560.00 C1671.48,555.57 1668.20,550.33 1664.20,547.00 C1660.20,543.67 1654.12,542.50 1650.40,540.00 C1646.68,537.50 1643.32,536.17 1641.90,532.00 C1640.48,527.83 1641.97,521.45 1641.90,515.00 C1641.83,508.55 1641.97,499.90 1641.50,493.30 C1641.03,486.70 1640.40,481.37 1639.10,475.40 C1637.80,469.43 1635.77,463.47 1633.70,457.50 C1631.63,451.53 1629.53,445.57 1626.70,439.60 C1623.87,433.63 1619.53,427.67 1616.70,421.70 C1613.87,415.73 1611.42,409.92 1609.70,403.80 C1607.98,397.68 1607.17,390.97 1606.40,385.00 C1605.63,379.03 1604.60,372.05 1605.10,368.00 C1605.60,363.95 1607.52,364.53 1609.40,360.70 C1611.28,356.87 1614.77,350.12 1616.40,345.00 C1618.03,339.88 1618.90,334.33 1619.20,330.00 C1619.50,325.67 1618.58,322.50 1618.20,319.00 C1617.82,315.50 1616.80,312.17 1616.90,309.00 C1617.00,305.83 1618.47,303.22 1618.80,300.00 C1619.13,296.78 1618.88,291.42 1618.90,289.70 A54.5,38.4 0 0 0 1509.90,289.7 Z" stroke="#5e6e58" stroke-width="32" opacity="0.7"/>
<path d="M1509.90,289.70 C1509.92,291.42 1509.67,296.78 1510.00,300.00 C1510.33,303.22 1511.80,305.83 1511.90,309.00 C1512.00,312.17 1510.98,315.50 1510.60,319.00 C1510.22,322.50 1509.30,325.67 1509.60,330.00 C1509.90,334.33 1510.77,339.88 1512.40,345.00 C1514.03,350.12 1517.52,356.87 1519.40,360.70 C1521.28,364.53 1523.20,363.95 1523.70,368.00 C1524.20,372.05 1523.17,379.03 1522.40,385.00 C1521.63,390.97 1520.82,397.68 1519.10,403.80 C1517.38,409.92 1514.93,415.73 1512.10,421.70 C1509.27,427.67 1504.93,433.63 1502.10,439.60 C1499.27,445.57 1497.17,451.53 1495.10,457.50 C1493.03,463.47 1491.00,469.43 1489.70,475.40 C1488.40,481.37 1487.77,486.70 1487.30,493.30 C1486.83,499.90 1486.97,508.55 1486.90,515.00 C1486.83,521.45 1488.32,527.83 1486.90,532.00 C1485.48,536.17 1482.12,537.50 1478.40,540.00 C1474.68,542.50 1468.60,543.67 1464.60,547.00 C1460.60,550.33 1457.32,555.57 1454.40,560.00 C1451.48,564.43 1449.68,568.27 1447.10,573.60 C1444.52,578.93 1441.18,585.47 1438.90,592.00 C1436.62,598.53 1434.92,606.47 1433.40,612.80 C1431.88,619.13 1430.63,624.80 1429.80,630.00 C1428.97,635.20 1428.67,639.00 1428.40,644.00 C1428.13,649.00 1428.23,657.33 1428.20,660.00 L1428.20,1044 A136.2,100 0 0 0 1700.60,1044 L1700.60,660 L1700.60,660.00 C1700.57,657.33 1700.67,649.00 1700.40,644.00 C1700.13,639.00 1699.83,635.20 1699.00,630.00 C1698.17,624.80 1696.92,619.13 1695.40,612.80 C1693.88,606.47 1692.18,598.53 1689.90,592.00 C1687.62,585.47 1684.28,578.93 1681.70,573.60 C1679.12,568.27 1677.32,564.43 1674.40,560.00 C1671.48,555.57 1668.20,550.33 1664.20,547.00 C1660.20,543.67 1654.12,542.50 1650.40,540.00 C1646.68,537.50 1643.32,536.17 1641.90,532.00 C1640.48,527.83 1641.97,521.45 1641.90,515.00 C1641.83,508.55 1641.97,499.90 1641.50,493.30 C1641.03,486.70 1640.40,481.37 1639.10,475.40 C1637.80,469.43 1635.77,463.47 1633.70,457.50 C1631.63,451.53 1629.53,445.57 1626.70,439.60 C1623.87,433.63 1619.53,427.67 1616.70,421.70 C1613.87,415.73 1611.42,409.92 1609.70,403.80 C1607.98,397.68 1607.17,390.97 1606.40,385.00 C1605.63,379.03 1604.60,372.05 1605.10,368.00 C1605.60,363.95 1607.52,364.53 1609.40,360.70 C1611.28,356.87 1614.77,350.12 1616.40,345.00 C1618.03,339.88 1618.90,334.33 1619.20,330.00 C1619.50,325.67 1618.58,322.50 1618.20,319.00 C1617.82,315.50 1616.80,312.17 1616.90,309.00 C1617.00,305.83 1618.47,303.22 1618.80,300.00 C1619.13,296.78 1618.88,291.42 1618.90,289.70 A54.5,38.4 0 0 0 1509.90,289.7 Z" stroke="#7a8270" stroke-width="25" opacity="0.85"/>
<path d="M1509.90,289.70 C1509.92,291.42 1509.67,296.78 1510.00,300.00 C1510.33,303.22 1511.80,305.83 1511.90,309.00 C1512.00,312.17 1510.98,315.50 1510.60,319.00 C1510.22,322.50 1509.30,325.67 1509.60,330.00 C1509.90,334.33 1510.77,339.88 1512.40,345.00 C1514.03,350.12 1517.52,356.87 1519.40,360.70 C1521.28,364.53 1523.20,363.95 1523.70,368.00 C1524.20,372.05 1523.17,379.03 1522.40,385.00 C1521.63,390.97 1520.82,397.68 1519.10,403.80 C1517.38,409.92 1514.93,415.73 1512.10,421.70 C1509.27,427.67 1504.93,433.63 1502.10,439.60 C1499.27,445.57 1497.17,451.53 1495.10,457.50 C1493.03,463.47 1491.00,469.43 1489.70,475.40 C1488.40,481.37 1487.77,486.70 1487.30,493.30 C1486.83,499.90 1486.97,508.55 1486.90,515.00 C1486.83,521.45 1488.32,527.83 1486.90,532.00 C1485.48,536.17 1482.12,537.50 1478.40,540.00 C1474.68,542.50 1468.60,543.67 1464.60,547.00 C1460.60,550.33 1457.32,555.57 1454.40,560.00 C1451.48,564.43 1449.68,568.27 1447.10,573.60 C1444.52,578.93 1441.18,585.47 1438.90,592.00 C1436.62,598.53 1434.92,606.47 1433.40,612.80 C1431.88,619.13 1430.63,624.80 1429.80,630.00 C1428.97,635.20 1428.67,639.00 1428.40,644.00 C1428.13,649.00 1428.23,657.33 1428.20,660.00 L1428.20,1044 A136.2,100 0 0 0 1700.60,1044 L1700.60,660 L1700.60,660.00 C1700.57,657.33 1700.67,649.00 1700.40,644.00 C1700.13,639.00 1699.83,635.20 1699.00,630.00 C1698.17,624.80 1696.92,619.13 1695.40,612.80 C1693.88,606.47 1692.18,598.53 1689.90,592.00 C1687.62,585.47 1684.28,578.93 1681.70,573.60 C1679.12,568.27 1677.32,564.43 1674.40,560.00 C1671.48,555.57 1668.20,550.33 1664.20,547.00 C1660.20,543.67 1654.12,542.50 1650.40,540.00 C1646.68,537.50 1643.32,536.17 1641.90,532.00 C1640.48,527.83 1641.97,521.45 1641.90,515.00 C1641.83,508.55 1641.97,499.90 1641.50,493.30 C1641.03,486.70 1640.40,481.37 1639.10,475.40 C1637.80,469.43 1635.77,463.47 1633.70,457.50 C1631.63,451.53 1629.53,445.57 1626.70,439.60 C1623.87,433.63 1619.53,427.67 1616.70,421.70 C1613.87,415.73 1611.42,409.92 1609.70,403.80 C1607.98,397.68 1607.17,390.97 1606.40,385.00 C1605.63,379.03 1604.60,372.05 1605.10,368.00 C1605.60,363.95 1607.52,364.53 1609.40,360.70 C1611.28,356.87 1614.77,350.12 1616.40,345.00 C1618.03,339.88 1618.90,334.33 1619.20,330.00 C1619.50,325.67 1618.58,322.50 1618.20,319.00 C1617.82,315.50 1616.80,312.17 1616.90,309.00 C1617.00,305.83 1618.47,303.22 1618.80,300.00 C1619.13,296.78 1618.88,291.42 1618.90,289.70 A54.5,38.4 0 0 0 1509.90,289.7 Z" stroke="#8a8f7a" stroke-width="18" opacity="0.9"/>
<path d="M1509.90,289.70 C1509.92,291.42 1509.67,296.78 1510.00,300.00 C1510.33,303.22 1511.80,305.83 1511.90,309.00 C1512.00,312.17 1510.98,315.50 1510.60,319.00 C1510.22,322.50 1509.30,325.67 1509.60,330.00 C1509.90,334.33 1510.77,339.88 1512.40,345.00 C1514.03,350.12 1517.52,356.87 1519.40,360.70 C1521.28,364.53 1523.20,363.95 1523.70,368.00 C1524.20,372.05 1523.17,379.03 1522.40,385.00 C1521.63,390.97 1520.82,397.68 1519.10,403.80 C1517.38,409.92 1514.93,415.73 1512.10,421.70 C1509.27,427.67 1504.93,433.63 1502.10,439.60 C1499.27,445.57 1497.17,451.53 1495.10,457.50 C1493.03,463.47 1491.00,469.43 1489.70,475.40 C1488.40,481.37 1487.77,486.70 1487.30,493.30 C1486.83,499.90 1486.97,508.55 1486.90,515.00 C1486.83,521.45 1488.32,527.83 1486.90,532.00 C1485.48,536.17 1482.12,537.50 1478.40,540.00 C1474.68,542.50 1468.60,543.67 1464.60,547.00 C1460.60,550.33 1457.32,555.57 1454.40,560.00 C1451.48,564.43 1449.68,568.27 1447.10,573.60 C1444.52,578.93 1441.18,585.47 1438.90,592.00 C1436.62,598.53 1434.92,606.47 1433.40,612.80 C1431.88,619.13 1430.63,624.80 1429.80,630.00 C1428.97,635.20 1428.67,639.00 1428.40,644.00 C1428.13,649.00 1428.23,657.33 1428.20,660.00 L1428.20,1044 A136.2,100 0 0 0 1700.60,1044 L1700.60,660 L1700.60,660.00 C1700.57,657.33 1700.67,649.00 1700.40,644.00 C1700.13,639.00 1699.83,635.20 1699.00,630.00 C1698.17,624.80 1696.92,619.13 1695.40,612.80 C1693.88,606.47 1692.18,598.53 1689.90,592.00 C1687.62,585.47 1684.28,578.93 1681.70,573.60 C1679.12,568.27 1677.32,564.43 1674.40,560.00 C1671.48,555.57 1668.20,550.33 1664.20,547.00 C1660.20,543.67 1654.12,542.50 1650.40,540.00 C1646.68,537.50 1643.32,536.17 1641.90,532.00 C1640.48,527.83 1641.97,521.45 1641.90,515.00 C1641.83,508.55 1641.97,499.90 1641.50,493.30 C1641.03,486.70 1640.40,481.37 1639.10,475.40 C1637.80,469.43 1635.77,463.47 1633.70,457.50 C1631.63,451.53 1629.53,445.57 1626.70,439.60 C1623.87,433.63 1619.53,427.67 1616.70,421.70 C1613.87,415.73 1611.42,409.92 1609.70,403.80 C1607.98,397.68 1607.17,390.97 1606.40,385.00 C1605.63,379.03 1604.60,372.05 1605.10,368.00 C1605.60,363.95 1607.52,364.53 1609.40,360.70 C1611.28,356.87 1614.77,350.12 1616.40,345.00 C1618.03,339.88 1618.90,334.33 1619.20,330.00 C1619.50,325.67 1618.58,322.50 1618.20,319.00 C1617.82,315.50 1616.80,312.17 1616.90,309.00 C1617.00,305.83 1618.47,303.22 1618.80,300.00 C1619.13,296.78 1618.88,291.42 1618.90,289.70 A54.5,38.4 0 0 0 1509.90,289.7 Z" stroke="#c4c6b8" stroke-width="7" opacity="0.9"/>
<path d="M1509.90,289.70 C1509.92,291.42 1509.67,296.78 1510.00,300.00 C1510.33,303.22 1511.80,305.83 1511.90,309.00 C1512.00,312.17 1510.98,315.50 1510.60,319.00 C1510.22,322.50 1509.30,325.67 1509.60,330.00 C1509.90,334.33 1510.77,339.88 1512.40,345.00 C1514.03,350.12 1517.52,356.87 1519.40,360.70 C1521.28,364.53 1523.20,363.95 1523.70,368.00 C1524.20,372.05 1523.17,379.03 1522.40,385.00 C1521.63,390.97 1520.82,397.68 1519.10,403.80 C1517.38,409.92 1514.93,415.73 1512.10,421.70 C1509.27,427.67 1504.93,433.63 1502.10,439.60 C1499.27,445.57 1497.17,451.53 1495.10,457.50 C1493.03,463.47 1491.00,469.43 1489.70,475.40 C1488.40,481.37 1487.77,486.70 1487.30,493.30 C1486.83,499.90 1486.97,508.55 1486.90,515.00 C1486.83,521.45 1488.32,527.83 1486.90,532.00 C1485.48,536.17 1482.12,537.50 1478.40,540.00 C1474.68,542.50 1468.60,543.67 1464.60,547.00 C1460.60,550.33 1457.32,555.57 1454.40,560.00 C1451.48,564.43 1449.68,568.27 1447.10,573.60 C1444.52,578.93 1441.18,585.47 1438.90,592.00 C1436.62,598.53 1434.92,606.47 1433.40,612.80 C1431.88,619.13 1430.63,624.80 1429.80,630.00 C1428.97,635.20 1428.67,639.00 1428.40,644.00 C1428.13,649.00 1428.23,657.33 1428.20,660.00 L1428.20,1044 A136.2,100 0 0 0 1700.60,1044 L1700.60,660 L1700.60,660.00 C1700.57,657.33 1700.67,649.00 1700.40,644.00 C1700.13,639.00 1699.83,635.20 1699.00,630.00 C1698.17,624.80 1696.92,619.13 1695.40,612.80 C1693.88,606.47 1692.18,598.53 1689.90,592.00 C1687.62,585.47 1684.28,578.93 1681.70,573.60 C1679.12,568.27 1677.32,564.43 1674.40,560.00 C1671.48,555.57 1668.20,550.33 1664.20,547.00 C1660.20,543.67 1654.12,542.50 1650.40,540.00 C1646.68,537.50 1643.32,536.17 1641.90,532.00 C1640.48,527.83 1641.97,521.45 1641.90,515.00 C1641.83,508.55 1641.97,499.90 1641.50,493.30 C1641.03,486.70 1640.40,481.37 1639.10,475.40 C1637.80,469.43 1635.77,463.47 1633.70,457.50 C1631.63,451.53 1629.53,445.57 1626.70,439.60 C1623.87,433.63 1619.53,427.67 1616.70,421.70 C1613.87,415.73 1611.42,409.92 1609.70,403.80 C1607.98,397.68 1607.17,390.97 1606.40,385.00 C1605.63,379.03 1604.60,372.05 1605.10,368.00 C1605.60,363.95 1607.52,364.53 1609.40,360.70 C1611.28,356.87 1614.77,350.12 1616.40,345.00 C1618.03,339.88 1618.90,334.33 1619.20,330.00 C1619.50,325.67 1618.58,322.50 1618.20,319.00 C1617.82,315.50 1616.80,312.17 1616.90,309.00 C1617.00,305.83 1618.47,303.22 1618.80,300.00 C1619.13,296.78 1618.88,291.42 1618.90,289.70 A54.5,38.4 0 0 0 1509.90,289.7 Z" stroke="#d4ccb6" stroke-width="3.2" opacity="0.95"/>
</g>
<path d="M1509.90,289.70 C1509.92,291.42 1509.67,296.78 1510.00,300.00 C1510.33,303.22 1511.80,305.83 1511.90,309.00 C1512.00,312.17 1510.98,315.50 1510.60,319.00 C1510.22,322.50 1509.30,325.67 1509.60,330.00 C1509.90,334.33 1510.77,339.88 1512.40,345.00 C1514.03,350.12 1517.52,356.87 1519.40,360.70 C1521.28,364.53 1523.20,363.95 1523.70,368.00 C1524.20,372.05 1523.17,379.03 1522.40,385.00 C1521.63,390.97 1520.82,397.68 1519.10,403.80 C1517.38,409.92 1514.93,415.73 1512.10,421.70 C1509.27,427.67 1504.93,433.63 1502.10,439.60 C1499.27,445.57 1497.17,451.53 1495.10,457.50 C1493.03,463.47 1491.00,469.43 1489.70,475.40 C1488.40,481.37 1487.77,486.70 1487.30,493.30 C1486.83,499.90 1486.97,508.55 1486.90,515.00 C1486.83,521.45 1488.32,527.83 1486.90,532.00 C1485.48,536.17 1482.12,537.50 1478.40,540.00 C1474.68,542.50 1468.60,543.67 1464.60,547.00 C1460.60,550.33 1457.32,555.57 1454.40,560.00 C1451.48,564.43 1449.68,568.27 1447.10,573.60 C1444.52,578.93 1441.18,585.47 1438.90,592.00 C1436.62,598.53 1434.92,606.47 1433.40,612.80 C1431.88,619.13 1430.63,624.80 1429.80,630.00 C1428.97,635.20 1428.67,639.00 1428.40,644.00 C1428.13,649.00 1428.23,657.33 1428.20,660.00 L1428.20,1044 A136.2,100 0 0 0 1700.60,1044 L1700.60,660 L1700.60,660.00 C1700.57,657.33 1700.67,649.00 1700.40,644.00 C1700.13,639.00 1699.83,635.20 1699.00,630.00 C1698.17,624.80 1696.92,619.13 1695.40,612.80 C1693.88,606.47 1692.18,598.53 1689.90,592.00 C1687.62,585.47 1684.28,578.93 1681.70,573.60 C1679.12,568.27 1677.32,564.43 1674.40,560.00 C1671.48,555.57 1668.20,550.33 1664.20,547.00 C1660.20,543.67 1654.12,542.50 1650.40,540.00 C1646.68,537.50 1643.32,536.17 1641.90,532.00 C1640.48,527.83 1641.97,521.45 1641.90,515.00 C1641.83,508.55 1641.97,499.90 1641.50,493.30 C1641.03,486.70 1640.40,481.37 1639.10,475.40 C1637.80,469.43 1635.77,463.47 1633.70,457.50 C1631.63,451.53 1629.53,445.57 1626.70,439.60 C1623.87,433.63 1619.53,427.67 1616.70,421.70 C1613.87,415.73 1611.42,409.92 1609.70,403.80 C1607.98,397.68 1607.17,390.97 1606.40,385.00 C1605.63,379.03 1604.60,372.05 1605.10,368.00 C1605.60,363.95 1607.52,364.53 1609.40,360.70 C1611.28,356.87 1614.77,350.12 1616.40,345.00 C1618.03,339.88 1618.90,334.33 1619.20,330.00 C1619.50,325.67 1618.58,322.50 1618.20,319.00 C1617.82,315.50 1616.80,312.17 1616.90,309.00 C1617.00,305.83 1618.47,303.22 1618.80,300.00 C1619.13,296.78 1618.88,291.42 1618.90,289.70 A54.5,38.4 0 0 0 1509.90,289.7 Z" fill="none" stroke="#2a2a2a" stroke-width="1.2" opacity="0.6"/>
<path d="M1428.2,637 A136.1,92 0 0 1 1700.4,637" fill="none" stroke="#111" stroke-width="1.3"/>
<path d="M1432.7,644 A131.6,91 0 0 1 1695.9,644" fill="none" stroke="#1a3a18" stroke-width="1.2"/>
<ellipse cx="1564.4" cy="1044" rx="136" ry="97.5" fill="url(#ringG)" stroke="#111" stroke-width="1.3"/>
<ellipse cx="1564.4" cy="1053.5" rx="124.6" ry="83.5" fill="url(#ring2G)" stroke="#111" stroke-width="1.1"/>
<ellipse cx="1564.4" cy="1055" rx="113.4" ry="76" fill="#0f2a0e" stroke="#000" stroke-width="1.3"/>
<ellipse cx="1564.4" cy="1058.8" rx="19" ry="12.5" fill="none" stroke="#0a1f0a" stroke-width="5" opacity="0.7"/>
<ellipse cx="1564.4" cy="289.7" rx="54.5" ry="38.4" fill="#3f5d3c" stroke="#1e361c" stroke-width="1" opacity="0.96"/>
<ellipse cx="1564.4" cy="290" rx="45" ry="27" fill="url(#openG)" stroke="#0c2c0a" stroke-width="6"/>
<ellipse cx="1564.4" cy="289.7" rx="51" ry="35" fill="none" stroke="#7a9070" stroke-width="1" opacity="0.6"/>
<path d="M1528.4,296 A40,17 0 0 1 1600.4,296" fill="none" stroke="#c9c9a9" stroke-width="1.4" opacity="0.55"/>
<path d="M1511.4,300 C1524.4,322 1604.4,322 1617.4,300" fill="none" stroke="#c0c4a4" stroke-width="1.3" opacity="0.5"/>
<path d="M1514.4,342 C1529.4,366 1599.4,366 1614.4,342" fill="none" stroke="#c0c4a4" stroke-width="1.2" opacity="0.45"/>
<path d="M1535.10,368.00 C1534.90,372.50 1534.47,386.17 1533.90,395.00 C1533.33,403.83 1533.12,412.17 1531.70,421.00 C1530.28,429.83 1527.67,439.00 1525.40,448.00 C1523.13,457.00 1520.77,466.33 1518.10,475.00 C1515.43,483.67 1512.10,491.00 1509.40,500.00 C1506.70,509.00 1503.62,521.17 1501.90,529.00 C1500.18,536.83 1499.57,544.00 1499.10,547.00" fill="none" stroke="#d0d0b0" stroke-width="1.4" opacity="0.7"/>
<path d="M1593.70,368.00 C1593.90,372.50 1594.33,386.17 1594.90,395.00 C1595.47,403.83 1595.68,412.17 1597.10,421.00 C1598.52,429.83 1601.13,439.00 1603.40,448.00 C1605.67,457.00 1608.03,466.33 1610.70,475.00 C1613.37,483.67 1616.70,491.00 1619.40,500.00 C1622.10,509.00 1625.18,521.17 1626.90,529.00 C1628.62,536.83 1629.23,544.00 1629.70,547.00" fill="none" stroke="#d0d0b0" stroke-width="1.4" opacity="0.7"/>
<path d="M1524.50,368.00 C1524.28,370.83 1523.97,379.03 1523.20,385.00 C1522.43,390.97 1521.62,397.68 1519.90,403.80 C1518.18,409.92 1515.73,415.73 1512.90,421.70 C1510.07,427.67 1505.73,433.63 1502.90,439.60 C1500.07,445.57 1497.97,451.53 1495.90,457.50 C1493.83,463.47 1491.80,469.43 1490.50,475.40 C1489.20,481.37 1488.57,486.70 1488.10,493.30 C1487.63,499.90 1487.77,508.55 1487.70,515.00 C1487.63,521.45 1487.70,529.17 1487.70,532.00" fill="none" stroke="#c8c8a8" stroke-width="1.2" opacity="0.8"/>
<path d="M1604.30,368.00 C1604.52,370.83 1604.83,379.03 1605.60,385.00 C1606.37,390.97 1607.18,397.68 1608.90,403.80 C1610.62,409.92 1613.07,415.73 1615.90,421.70 C1618.73,427.67 1623.07,433.63 1625.90,439.60 C1628.73,445.57 1630.83,451.53 1632.90,457.50 C1634.97,463.47 1637.00,469.43 1638.30,475.40 C1639.60,481.37 1640.23,486.70 1640.70,493.30 C1641.17,499.90 1641.03,508.55 1641.10,515.00 C1641.17,521.45 1641.10,529.17 1641.10,532.00" fill="none" stroke="#c8c8a8" stroke-width="1.2" opacity="0.8"/>
<path d="M1488.4,534 C1524.4,512 1604.4,512 1640.4,534" fill="none" stroke="#c8c8a0" stroke-width="1.3" opacity="0.6"/>
<path d="M1486.4,552 C1524.4,532 1604.4,532 1642.4,552" fill="none" stroke="#c8c8a0" stroke-width="1" opacity="0.4"/>
<rect x="245.4" y="1057.75" width="2683.2999999999997" height="1.5" fill="rgba(0,255,0,0.3)"/>
<rect x="1563.4" y="126.4" width="2" height="1249.6" fill="rgba(255,0,0,0.4)"/>
<g id="browser">
<rect x="8" y="14" width="599" height="49" fill="#f2f2f2"/>
<rect x="8" y="14" width="599" height="1" fill="#d4d4d4"/><rect x="8" y="14" width="1" height="49" fill="#d4d4d4"/>
<rect x="605" y="14" width="2" height="49" fill="#c8c8c8"/><rect x="8" y="61" width="599" height="2" fill="#c8c8c8"/>
<path d="M18,40 L27.7,34 V46 Z M29,40 L38,34 V46 Z" fill="#333"/>
<text x="58.92" y="45.85" textLength="99.65" lengthAdjust="spacingAndGlyphs" style="font-size:22px;font-weight:normal;fill:#595959" >BROWSER</text>
<circle cx="575" cy="39" r="9" fill="#333"/><rect x="570" y="38" width="10" height="2" fill="#f2f2f2"/>
<rect x="80" y="74" width="470" height="40" fill="#f1f1f1"/>
<rect x="116" y="122" width="284" height="40" fill="#f1f1f1"/>
<rect x="116" y="170" width="228" height="40" fill="#f1f1f1"/>
<rect x="116" y="218" width="206" height="40" fill="#f1f1f1"/>
<rect x="116" y="266" width="238" height="40" fill="#f1f1f1"/>
<rect x="152" y="314" width="454" height="40" fill="#f1f1f1"/>
<rect x="116" y="362" width="272" height="40" fill="#f1f1f1"/>
<rect x="152" y="410" width="205" height="40" fill="#f1f1f1"/>
<rect x="152" y="458" width="205" height="40" fill="#f1f1f1"/>
<rect x="152" y="506" width="230" height="40" fill="#f1f1f1"/>
<rect x="188" y="554" width="222" height="40" fill="#f1f1f1"/>
<rect x="188" y="602" width="222" height="40" fill="#f1f1f1"/>
<path d="M45.95,100.1 V97.39999999999999 L55.400000000000006,87.94999999999999 H58.2 V100.1 Z" fill="url(#tg)" stroke="#000" stroke-width="1.7" stroke-linejoin="miter"/>
<path d="M82.9,133.9 H85.6 L93.4,142 L85.6,150.1 H82.9 Z" fill="#fff" stroke="#000" stroke-width="1.3" stroke-linejoin="miter"/>
<path d="M82.9,181.9 H85.6 L93.4,190 L85.6,198.1 H82.9 Z" fill="#fff" stroke="#000" stroke-width="1.3" stroke-linejoin="miter"/>
<path d="M82.9,229.9 H85.6 L93.4,238 L85.6,246.1 H82.9 Z" fill="#fff" stroke="#000" stroke-width="1.3" stroke-linejoin="miter"/>
<path d="M118.9,421.9 H121.6 L129.4,430 L121.6,438.1 H118.9 Z" fill="#fff" stroke="#000" stroke-width="1.3" stroke-linejoin="miter"/>
<path d="M118.9,469.9 H121.6 L129.4,478 L121.6,486.1 H118.9 Z" fill="#fff" stroke="#000" stroke-width="1.3" stroke-linejoin="miter"/>
<path d="M81.94999999999999,292.1 V289.40000000000003 L91.39999999999999,279.95000000000005 H94.19999999999999 V292.1 Z" fill="url(#tg)" stroke="#000" stroke-width="1.7" stroke-linejoin="miter"/>
<path d="M81.94999999999999,388.1 V385.40000000000003 L91.39999999999999,375.95000000000005 H94.19999999999999 V388.1 Z" fill="url(#tg)" stroke="#000" stroke-width="1.7" stroke-linejoin="miter"/>
<path d="M117.94999999999999,532.1 V529.4 L127.39999999999999,519.95 H130.2 V532.1 Z" fill="url(#tg)" stroke="#000" stroke-width="1.7" stroke-linejoin="miter"/>
<path d="M86,94 C93,80.8 111,80.8 118,94 C111,107.2 93,107.2 86,94 Z" fill="#999"/><circle cx="102" cy="94" r="5.1" fill="none" stroke="#f1f1f1" stroke-width="1.8"/>
<g stroke="#333" stroke-width="1.3" stroke-linejoin="round">
<path d="M138.6,84 L141.6,79.3 H153.8 V107 H138.6 Z" fill="url(#cubeF)"/>
<path d="M150.8,79.3 H153.8 V92.5 L150.8,96 Z" fill="url(#cubeS)" stroke="none"/>
<path d="M138.6,84 L141.6,79.3 H153.8 V107 H138.6 Z" fill="none"/>
<path d="M150.8,79.5 V96" stroke="#9aa4b4" stroke-width="1"/>
<path d="M139.2,96.5 H150.5" stroke="#8a93a3" stroke-width="1.2"/>
<path d="M150.8,96 L153.8,92.3 H165.3 V103.2 L162,107 H150.8 Z" fill="url(#cubeF)"/>
<path d="M162,96 L165.3,92.3 V103.2 L162,107 Z" fill="url(#cubeS)" stroke="none"/>
<path d="M150.8,96 L153.8,92.3 H165.3 V103.2 L162,107 H150.8 Z" fill="none"/>
</g>
<text x="195.49" y="102" textLength="334.77" lengthAdjust="spacingAndGlyphs" style="font-size:22px;font-weight:normal;fill:#333" >Glass bottle − fusion tutorial v1</text>
<polygon points="132.26,131.83 132.50,128.16 137.70,128.16 137.94,131.83 139.58,132.51 142.34,130.08 146.02,133.76 143.59,136.52 144.27,138.16 147.94,138.40 147.94,143.60 144.27,143.84 143.59,145.48 146.02,148.24 142.34,151.92 139.58,149.49 137.94,150.17 137.70,153.84 132.50,153.84 132.26,150.17 130.62,149.49 127.86,151.92 124.18,148.24 126.61,145.48 125.93,143.84 122.26,143.60 122.26,138.40 125.93,138.16 126.61,136.52 124.18,133.76 127.86,130.08 130.62,132.51" fill="#858585"/><circle cx="135.1" cy="141" r="4.6" fill="#f1f1f1"/>
<text x="173.62" y="150" textLength="200.48" lengthAdjust="spacingAndGlyphs" style="font-size:22px;font-weight:normal;fill:#333" >Document Settings</text>
<path d="M122,177 H135.3 L137.3,179.2 L135.3,181.4 H122 Z" fill="#999"/><path d="M122,183.7 H136.8 L141.2,179 H154 V203 H122 Z" fill="#999"/>
<text x="181.65" y="198" textLength="141.75" lengthAdjust="spacingAndGlyphs" style="font-size:22px;font-weight:normal;fill:#333" >Named Views</text>
<g fill="none" stroke="#888" stroke-width="1.7"><path d="M122.8,238.5 C129.5,226.3 146.5,226.3 153.2,238.5 C146.5,250.7 129.5,250.7 122.8,238.5 Z"/><circle cx="138" cy="238.5" r="5.1"/><line x1="128" y1="228.5" x2="148" y2="248.5" stroke="#f1f1f1" stroke-width="5"/><line x1="128" y1="228.5" x2="148" y2="248.5"/></g>
<path d="M172,225 H185.3 L187.3,227.2 L185.3,229.4 H172 Z" fill="#999"/><path d="M172,231.7 H186.8 L191.2,227 H204 V251 H172 Z" fill="#999"/>
<text x="231.15" y="246" textLength="67.37" lengthAdjust="spacingAndGlyphs" style="font-size:22px;font-weight:normal;fill:#333" >Origin</text>
<g fill="none" stroke="#888" stroke-width="1.7"><path d="M122.8,286.5 C129.5,274.3 146.5,274.3 153.2,286.5 C146.5,298.7 129.5,298.7 122.8,286.5 Z"/><circle cx="138" cy="286.5" r="5.1"/><line x1="128" y1="276.5" x2="148" y2="296.5" stroke="#f1f1f1" stroke-width="5"/><line x1="128" y1="276.5" x2="148" y2="296.5"/></g>
<path d="M172,273 H185.3 L187.3,275.2 L185.3,277.4 H172 Z" fill="#999"/><path d="M172,279.7 H186.8 L191.2,275 H204 V299 H172 Z" fill="#999"/>
<text x="231.3" y="294" textLength="98.1" lengthAdjust="spacingAndGlyphs" style="font-size:22px;font-weight:normal;fill:#333" >Canvases</text>
<path d="M158,334 C165,320.8 183,320.8 190,334 C183,347.2 165,347.2 158,334 Z" fill="#d4d4d4"/><circle cx="174" cy="334" r="5.1" fill="none" stroke="#f1f1f1" stroke-width="1.8"/>
<g>
<rect x="209.7" y="319.6" width="28.6" height="29.3" rx="1.5" fill="url(#skyG)" stroke="#333" stroke-width="1.3"/>
<path d="M210.4,338 C213,333 216,331 219,331.5 C222,332 230,342 237.6,348.2 H210.4 Z" fill="#8e9aad"/>
<path d="M219,331.5 C222,332 230,342 237.6,348.2" fill="none" stroke="#fffbe0" stroke-width="0.8"/>
<path d="M226,340 C229,334 233,332 237.6,336 V346 C233,343 229,341.5 226,340 Z" fill="#b3bfca"/>
<circle cx="230" cy="325.8" r="2.8" fill="#fff" stroke="#ffe38a" stroke-width="1"/>
<circle cx="216" cy="340.8" r="6.2" fill="#fff" stroke="#f00" stroke-width="2"/>
<line x1="212" y1="345" x2="220" y2="336.6" stroke="#f00" stroke-width="2"/>
</g>
<text x="267.63" y="342" textLength="318.75" lengthAdjust="spacingAndGlyphs" style="font-size:22px;font-weight:normal;fill:#333" >Learn−Fusion−360−in−30−D...</text>
<path d="M122,382 C129,368.8 147,368.8 154,382 C147,395.2 129,395.2 122,382 Z" fill="#999"/><circle cx="138" cy="382" r="5.1" fill="none" stroke="#f1f1f1" stroke-width="1.8"/>
<rect x="166" y="366" width="172" height="32" fill="#9b9b9b"/>
<g>
<path d="M176.4,370.3 H203.6 V389.6 L195.8,397.2 H176.4 Z" fill="#dadada"/>
<path d="M176.4,370.3 H203.6 L195.8,378.4 H176.4 Z" fill="#f6f6f6"/>
<path d="M195.8,378.4 L203.6,370.3 V389.6 L195.8,397.2 Z" fill="#bdbdbd"/>
<path d="M176.4,370.3 H203.6 V389.6 L195.8,397.2 H176.4 Z" fill="none" stroke="#5a5a5a" stroke-width="1.6"/>
<g fill="none" stroke="#9b9b9b" stroke-width="4.6" stroke-linecap="round">
<circle cx="179" cy="368.6" r="2.3"/>
<line x1="179" y1="371" x2="179" y2="381.5"/>
<path d="M173,375.5 C173.5,380 176,381.8 179,381.8 C182,381.8 184.5,380 185,375.5"/>
</g>
<path d="M172.5,379 L172,374.5 L175.5,377Z M185.5,379 L186,374.5 L182.5,377Z" fill="#9b9b9b" stroke="#9b9b9b" stroke-width="3"/>
<g fill="none" stroke="#2a2a2a" stroke-width="1.8">
<circle cx="179" cy="368.6" r="2.3"/>
<line x1="179" y1="371" x2="179" y2="381.5"/>
<line x1="176.6" y1="374.5" x2="181.4" y2="374.5"/>
<path d="M173,376 C173.5,380 176,381.6 179,381.6 C182,381.6 184.5,380 185,376"/>
</g>
<path d="M172.2,379.2 L172.2,374.8 L175.3,378Z M185.8,379.2 L185.8,374.8 L182.7,378Z" fill="#2a2a2a"/>
</g>
<text x="232.39" y="390" textLength="83.7" lengthAdjust="spacingAndGlyphs" style="font-size:23px;font-weight:bold;fill:#fff" >bottle:1</text>
<circle cx="360" cy="381" r="12.3" fill="url(#radioG)" stroke="#2e2e2e" stroke-width="1.3"/><circle cx="360" cy="381" r="4.9" fill="#444"/>
<g fill="none" stroke="#888" stroke-width="1.7"><path d="M158.8,430.5 C165.5,418.3 182.5,418.3 189.2,430.5 C182.5,442.7 165.5,442.7 158.8,430.5 Z"/><circle cx="174" cy="430.5" r="5.1"/><line x1="164" y1="420.5" x2="184" y2="440.5" stroke="#f1f1f1" stroke-width="5"/><line x1="164" y1="420.5" x2="184" y2="440.5"/></g>
<path d="M208,417 H221.3 L223.3,419.2 L221.3,421.4 H208 Z" fill="#999"/><path d="M208,423.7 H222.8 L227.2,419 H240 V443 H208 Z" fill="#999"/>
<text x="267.56" y="438" textLength="66.85" lengthAdjust="spacingAndGlyphs" style="font-size:22px;font-weight:normal;fill:#333" >Origin</text>
<path d="M158,478 C165,464.8 183,464.8 190,478 C183,491.2 165,491.2 158,478 Z" fill="#999"/><circle cx="174" cy="478" r="5.1" fill="none" stroke="#f1f1f1" stroke-width="1.8"/>
<path d="M208,465 H221.3 L223.3,467.2 L221.3,469.4 H208 Z" fill="#999"/><path d="M208,471.7 H222.8 L227.2,467 H240 V491 H208 Z" fill="#999"/>
<text x="267.68" y="486" textLength="68.82" lengthAdjust="spacingAndGlyphs" style="font-size:22px;font-weight:normal;fill:#333" >Bodies</text>
<path d="M158,526 C165,512.8 183,512.8 190,526 C183,539.2 165,539.2 158,526 Z" fill="#999"/><circle cx="174" cy="526" r="5.1" fill="none" stroke="#f1f1f1" stroke-width="1.8"/>
<path d="M208,513 H221.3 L223.3,515.2 L221.3,517.4 H208 Z" fill="#999"/><path d="M208,519.7 H222.8 L227.2,515 H240 V539 H208 Z" fill="#999"/>
<text x="267.68" y="534" textLength="92.12" lengthAdjust="spacingAndGlyphs" style="font-size:22px;font-weight:normal;fill:#333" >Sketches</text>
<g fill="none" stroke="#888" stroke-width="1.7"><path d="M194.8,574.5 C201.5,562.3 218.5,562.3 225.2,574.5 C218.5,586.7 201.5,586.7 194.8,574.5 Z"/><circle cx="210" cy="574.5" r="5.1"/><line x1="200" y1="564.5" x2="220" y2="584.5" stroke="#f1f1f1" stroke-width="5"/><line x1="200" y1="564.5" x2="220" y2="584.5"/></g>
<g>
<g stroke="#666" stroke-width="1.1" fill="none">
<line x1="245.3" y1="560" x2="271.5" y2="560" stroke="#999" stroke-width="1.4"/>
<line x1="245.3" y1="560" x2="245.3" y2="586"/>
<line x1="271.5" y1="560" x2="271.5" y2="572"/>
<line x1="245.3" y1="586" x2="260" y2="586" stroke="#999" stroke-width="1.4"/>
<line x1="252.2" y1="566.8" x2="264.7" y2="566.8"/>
<line x1="252.2" y1="566.8" x2="252.2" y2="579.3"/>
<path d="M264.7,566.8 C264,573 259,578.5 252.2,579.3" stroke="#444"/>
</g>
<g fill="#1e90ff">
<rect x="243.8" y="558.5" width="3" height="3"/><rect x="270" y="558.5" width="3" height="3"/><rect x="243.8" y="584.5" width="3" height="3"/>
<rect x="250.7" y="565.3" width="3" height="3"/><rect x="263.2" y="565.3" width="3" height="3"/><rect x="250.7" y="577.8" width="3" height="3"/>
</g>
<path d="M260.3,586.5 L262,581.5 L265.5,585 Z" fill="#555"/>
<path d="M262,581.5 L270.5,573.5 L274,577 L265.5,585 Z" fill="#f8c050"/>
<path d="M270.5,573.5 L272.3,571.7 C273.5,570.5 275,571 275.7,571.7 C276.4,572.5 276.5,574 275.8,575 L274,577 Z" fill="#f03030"/>
</g>
<text x="302.95" y="582" textLength="83.29" lengthAdjust="spacingAndGlyphs" style="font-size:22px;font-weight:normal;fill:#333" >Sketch2</text>
<g fill="none" stroke="#888" stroke-width="1.7"><path d="M194.8,622.5 C201.5,610.3 218.5,610.3 225.2,622.5 C218.5,634.7 201.5,634.7 194.8,622.5 Z"/><circle cx="210" cy="622.5" r="5.1"/><line x1="200" y1="612.5" x2="220" y2="632.5" stroke="#f1f1f1" stroke-width="5"/><line x1="200" y1="612.5" x2="220" y2="632.5"/></g>
<g>
<g fill="#555">
<rect x="244.4" y="606.5" width="3.2" height="3.2"/><rect x="270.4" y="606.5" width="3.2" height="3.2"/><rect x="244.4" y="632.5" width="3.2" height="3.2"/>
<rect x="250.3" y="607.3" width="17.5" height="1.6"/>
<rect x="245.2" y="612" width="1.6" height="18"/>
<rect x="271.2" y="612" width="1.6" height="8"/>
<rect x="250.3" y="633.3" width="8.8" height="1.6"/>
</g>
<path d="M266,628 V625.5 C266,621.6 272,621.6 272,625.5 V628" fill="none" stroke="#d02020" stroke-width="1.6"/>
<rect x="262.8" y="628.6" width="12.4" height="9.4" fill="#e39a9a" stroke="#d02020" stroke-width="1.4"/>
</g>
<text x="302.95" y="630" textLength="83.29" lengthAdjust="spacingAndGlyphs" style="font-size:22px;font-weight:normal;fill:#333" >Sketch3</text>
</g>
<rect x="8" y="1318" width="599" height="48" fill="#f2f2f2"/>
<rect x="8" y="1318" width="1" height="48" fill="#d8d8d8"/><rect x="8" y="1318" width="599" height="1" fill="#e0e0e0"/>
<rect x="605" y="1318" width="2" height="48" fill="#c8c8c8"/><rect x="8" y="1364" width="599" height="2" fill="#c8c8c8"/>
<text x="58.04" y="1350.1" textLength="123.61" lengthAdjust="spacingAndGlyphs" style="font-size:22px;font-weight:normal;fill:#5a5a5a" >COMMENTS</text>
<circle cx="575" cy="1343" r="9" fill="#222"/><rect x="570" y="1342" width="10" height="2" fill="#f2f2f2"/><rect x="574" y="1338" width="2" height="10" fill="#f2f2f2"/>
<rect x="1276" y="1316.5" width="474" height="47.5" fill="#f1f1f1"/>
<g stroke="#2e3440" stroke-width="1.2">
<path d="M1284,1340.8 A14.4,4.8 0 1 1 1298.4,1345.6" fill="none"/>
<path d="M1295.1,1353.6 V1331 H1291.9 L1298.4,1324 L1305,1331 H1301.8 V1353.6 Z" fill="#e8eaee" stroke-linejoin="round"/>
<path d="M1312.8,1340.8 A14.4,4.8 0 0 1 1301.8,1345.4" fill="none"/>
<path d="M1292.5,1345.4 A14.4,4.8 0 0 1 1284,1340.8" fill="none"/>
</g>
<path d="M1288,1344.6 L1291.5,1341 V1348 Z" fill="#2e3440"/>
<path d="M1324,1336 H1335.8 L1329.9,1343.6 Z" fill="#333"/>
<g stroke="#2e3440" stroke-width="1.2" stroke-linejoin="round">
<path d="M1350.6,1333.6 L1358.8,1326.2 V1333.4 Z" fill="#a9b0bb"/>
<path d="M1360.7,1332.4 L1370.5,1328.4 V1333.4 Z" fill="#a9b0bb"/>
<rect x="1350.2" y="1334.3" width="27.5" height="18.5" rx="1" fill="#eceef1"/>
<rect x="1354.3" y="1338.3" width="19.2" height="10.3" rx="0.8" fill="url(#lookG)"/>
</g>
<path d="M1407.5,1353.5 C1404,1350 1403,1346 1401.2,1343.8 C1400.6,1342.6 1402,1341.8 1403.5,1342.6 L1408,1346 L1406,1330 C1405.6,1328.2 1408.8,1327.8 1409.2,1329.6 L1411.2,1338 L1411.2,1325.6 C1411.2,1323.6 1414.4,1323.6 1414.4,1325.6 L1414.8,1337.4 L1417.4,1327.2 C1417.8,1325.4 1421,1325.8 1420.6,1327.8 L1418.8,1338.8 L1424.4,1331.4 C1425.4,1329.8 1428.2,1330.8 1427.4,1332.6 L1421.4,1346 C1420.2,1350 1419.6,1352.5 1418,1353.8 Z" fill="#f4f5f7" stroke="#2e3440" stroke-width="1.2" stroke-linejoin="round"/>
<g>
<line x1="1472.6" y1="1343.3" x2="1480.6" y2="1351" stroke="#2e3440" stroke-width="4.2" stroke-linecap="round"/>
<line x1="1474" y1="1344.7" x2="1479.8" y2="1350.2" stroke="#7d8796" stroke-width="1"/>
<circle cx="1463.7" cy="1334.7" r="10.4" fill="url(#lensG)" stroke="#2a2f38" stroke-width="1.3"/>
<path d="M1476,1327.2 H1483 M1479.5,1324.4 V1330.6 M1476,1333.5 H1483" stroke="#2e3440" stroke-width="1.2"/>
</g>
<g>
<rect x="1505.6" y="1325.4" width="28.8" height="28.6" fill="none" stroke="#666" stroke-width="1" stroke-dasharray="4,2.3"/>
<line x1="1524.6" y1="1344" x2="1532.6" y2="1351.8" stroke="#2e3440" stroke-width="4.2" stroke-linecap="round"/>
<circle cx="1515.9" cy="1335.9" r="10.4" fill="url(#lensG)" stroke="#2a2f38" stroke-width="1.3"/>
</g>
<path d="M1546,1336 H1557.9 L1551.95,1343.6 Z" fill="#333"/>
<g stroke-linejoin="round">
<path d="M1584,1347.6 H1588.6 L1589.5,1352 H1583.1 Z" fill="#c9ced6" stroke="#2e3440" stroke-width="1"/>
<rect x="1577.4" y="1351.4" width="17.1" height="2.6" rx="1.3" fill="#dfe3e8" stroke="#2e3440" stroke-width="1"/>
<rect x="1571.6" y="1324.6" width="29" height="23" rx="1.2" fill="#f2f3f5" stroke="#2a2f38" stroke-width="1.3"/>
<rect x="1574.6" y="1327.4" width="22.9" height="17" rx="0.8" fill="#9bb9de" stroke="#23407a" stroke-width="1.2"/>
</g>
<path d="M1606,1336 H1618 L1612.0,1343.6 Z" fill="#333"/>
<g><rect x="1633.6" y="1325.4" width="28" height="28" rx="1.2" fill="url(#gridIcG)" stroke="#2a2a2a" stroke-width="1.3"/><rect x="1635.40" y="1327.20" width="2.6" height="2.6" fill="#fff" opacity="1.00"/><rect x="1635.40" y="1331.18" width="2.6" height="2.6" fill="#fff" opacity="0.91"/><rect x="1635.40" y="1335.16" width="2.6" height="2.6" fill="#fff" opacity="0.82"/><rect x="1635.40" y="1339.14" width="2.6" height="2.6" fill="#fff" opacity="0.73"/><rect x="1635.40" y="1343.12" width="2.6" height="2.6" fill="#fff" opacity="0.64"/><rect x="1635.40" y="1347.10" width="2.6" height="2.6" fill="#fff" opacity="0.55"/><rect x="1635.40" y="1351.08" width="2.6" height="2.6" fill="#fff" opacity="0.46"/><rect x="1639.38" y="1327.20" width="2.6" height="2.6" fill="#fff" opacity="1.00"/><rect x="1639.38" y="1331.18" width="2.6" height="2.6" fill="#fff" opacity="0.91"/><rect x="1639.38" y="1335.16" width="2.6" height="2.6" fill="#fff" opacity="0.82"/><rect x="1639.38" y="1339.14" width="2.6" height="2.6" fill="#fff" opacity="0.73"/><rect x="1639.38" y="1343.12" width="2.6" height="2.6" fill="#fff" opacity="0.64"/><rect x="1639.38" y="1347.10" width="2.6" height="2.6" fill="#fff" opacity="0.55"/><rect x="1639.38" y="1351.08" width="2.6" height="2.6" fill="#fff" opacity="0.46"/><rect x="1643.36" y="1327.20" width="2.6" height="2.6" fill="#fff" opacity="1.00"/><rect x="1643.36" y="1331.18" width="2.6" height="2.6" fill="#fff" opacity="0.91"/><rect x="1643.36" y="1335.16" width="2.6" height="2.6" fill="#fff" opacity="0.82"/><rect x="1643.36" y="1339.14" width="2.6" height="2.6" fill="#fff" opacity="0.73"/><rect x="1643.36" y="1343.12" width="2.6" height="2.6" fill="#fff" opacity="0.64"/><rect x="1643.36" y="1347.10" width="2.6" height="2.6" fill="#fff" opacity="0.55"/><rect x="1643.36" y="1351.08" width="2.6" height="2.6" fill="#fff" opacity="0.46"/><rect x="1647.34" y="1327.20" width="2.6" height="2.6" fill="#fff" opacity="1.00"/><rect x="1647.34" y="1331.18" width="2.6" height="2.6" fill="#fff" opacity="0.91"/><rect x="1647.34" y="1335.16" width="2.6" height="2.6" fill="#fff" opacity="0.82"/><rect x="1647.34" y="1339.14" width="2.6" height="2.6" fill="#fff" opacity="0.73"/><rect x="1647.34" y="1343.12" width="2.6" height="2.6" fill="#fff" opacity="0.64"/><rect x="1647.34" y="1347.10" width="2.6" height="2.6" fill="#fff" opacity="0.55"/><rect x="1647.34" y="1351.08" width="2.6" height="2.6" fill="#fff" opacity="0.46"/><rect x="1651.32" y="1327.20" width="2.6" height="2.6" fill="#fff" opacity="1.00"/><rect x="1651.32" y="1331.18" width="2.6" height="2.6" fill="#fff" opacity="0.91"/><rect x="1651.32" y="1335.16" width="2.6" height="2.6" fill="#fff" opacity="0.82"/><rect x="1651.32" y="1339.14" width="2.6" height="2.6" fill="#fff" opacity="0.73"/><rect x="1651.32" y="1343.12" width="2.6" height="2.6" fill="#fff" opacity="0.64"/><rect x="1651.32" y="1347.10" width="2.6" height="2.6" fill="#fff" opacity="0.55"/><rect x="1651.32" y="1351.08" width="2.6" height="2.6" fill="#fff" opacity="0.46"/><rect x="1655.30" y="1327.20" width="2.6" height="2.6" fill="#fff" opacity="1.00"/><rect x="1655.30" y="1331.18" width="2.6" height="2.6" fill="#fff" opacity="0.91"/><rect x="1655.30" y="1335.16" width="2.6" height="2.6" fill="#fff" opacity="0.82"/><rect x="1655.30" y="1339.14" width="2.6" height="2.6" fill="#fff" opacity="0.73"/><rect x="1655.30" y="1343.12" width="2.6" height="2.6" fill="#fff" opacity="0.64"/><rect x="1655.30" y="1347.10" width="2.6" height="2.6" fill="#fff" opacity="0.55"/><rect x="1655.30" y="1351.08" width="2.6" height="2.6" fill="#fff" opacity="0.46"/><rect x="1659.28" y="1327.20" width="2.6" height="2.6" fill="#fff" opacity="1.00"/><rect x="1659.28" y="1331.18" width="2.6" height="2.6" fill="#fff" opacity="0.91"/><rect x="1659.28" y="1335.16" width="2.6" height="2.6" fill="#fff" opacity="0.82"/><rect x="1659.28" y="1339.14" width="2.6" height="2.6" fill="#fff" opacity="0.73"/><rect x="1659.28" y="1343.12" width="2.6" height="2.6" fill="#fff" opacity="0.64"/><rect x="1659.28" y="1347.10" width="2.6" height="2.6" fill="#fff" opacity="0.55"/><rect x="1659.28" y="1351.08" width="2.6" height="2.6" fill="#fff" opacity="0.46"/></g>
<path d="M1667.9,1336 H1680 L1673.95,1343.6 Z" fill="#333"/>
<g stroke-linejoin="round"><rect x="1695.6" y="1327.4" width="13.8" height="12" rx="1" fill="#cfe0f3" stroke="#1f3a6a" stroke-width="1.3"/><rect x="1697.8" y="1329.6000000000001" width="9.4" height="7.6" fill="#97b6dc" stroke="#6a88b8" stroke-width="0.7"/><rect x="1709.6" y="1327.4" width="13.8" height="12" rx="1" fill="#cfe0f3" stroke="#1f3a6a" stroke-width="1.3"/><rect x="1711.8" y="1329.6000000000001" width="9.4" height="7.6" fill="#97b6dc" stroke="#6a88b8" stroke-width="0.7"/><rect x="1695.6" y="1339.6" width="13.8" height="12" rx="1" fill="#cfe0f3" stroke="#1f3a6a" stroke-width="1.3"/><rect x="1697.8" y="1341.8" width="9.4" height="7.6" fill="#97b6dc" stroke="#6a88b8" stroke-width="0.7"/><rect x="1709.6" y="1339.6" width="13.8" height="12" rx="1" fill="#cfe0f3" stroke="#1f3a6a" stroke-width="1.3"/><rect x="1711.8" y="1341.8" width="9.4" height="7.6" fill="#97b6dc" stroke="#6a88b8" stroke-width="0.7"/></g>
<path d="M1730,1336 H1742 L1736.0,1343.6 Z" fill="#333"/>
<path d="M2855,65.3 H2945.5 L2953.7,128.7 H2847.4 Z" fill="url(#vcTop)" fill-opacity="0.88" stroke="#8a8a8a" stroke-width="1.2" stroke-linejoin="round"/>
<path d="M2847.4,128.7 H2953.7 L2952,136 L2945.5,193.6 H2855 Z" fill="#d9d9d9" fill-opacity="0.85" stroke="#8a8a8a" stroke-width="1.2" stroke-linejoin="round"/>
<text x="2868.47" y="101.8" textLength="63.43" lengthAdjust="spacingAndGlyphs" style="font-size:18px;font-weight:bold;fill:#9a9ca0">RIGHT</text>
<rect x="2868" y="116" width="64.7" height="27" fill="#c8c8c8" opacity="0.45"/>
<text transform="translate(2889.5,133.5) rotate(90) scale(0.74,1)" style="font-size:27px;font-weight:bold;fill:#8f9196" textLength="78" lengthAdjust="spacingAndGlyphs">BOTTOM</text>
<path d="M2844,118.5 L2854.6,195.3" stroke="#ff6060" stroke-width="2.6"/>
<text x="2834.5" y="116" style="font-size:29.5px;fill:#ff7070" textLength="15" lengthAdjust="spacingAndGlyphs">X</text>
<path d="M2855,195.3 H2961" stroke="#70ee70" stroke-width="2.6"/>
<text x="2966.8" y="205.5" style="font-size:29.5px;fill:#70ee70" textLength="15" lengthAdjust="spacingAndGlyphs">Y</text>
<rect x="2962" y="250" width="14" height="346" fill="#000" opacity="0.07" filter="url(#sh)"/>
<rect x="2971.4" y="245.6" width="45.1" height="352.4" fill="#f2f2f2" stroke="#c4c4c4" stroke-width="1"/>
<path d="M2982,268.3 L2991.5,262.6 V274 Z M2992.5,268.3 L3002,262.6 V274 Z" fill="#333"/>
<text transform="translate(3004.7,573.4) rotate(-90)" textLength="168.12" lengthAdjust="spacingAndGlyphs" style="font-size:27px;fill:#222">APPEARANCE</text>
<path d="M2983,1332.8 A16.2,16.2 0 0 1 2999.3,1349 V1365 H2983 A16.1,16.1 0 0 1 2983,1332.8 Z" fill="#000"/>
<path d="M2974,1353.5 L2985,1343 M2974,1357 L2992,1343 M2984.5,1357.5 L2991.5,1351" stroke="#fff" stroke-width="1.2"/>
</svg></body></html>
